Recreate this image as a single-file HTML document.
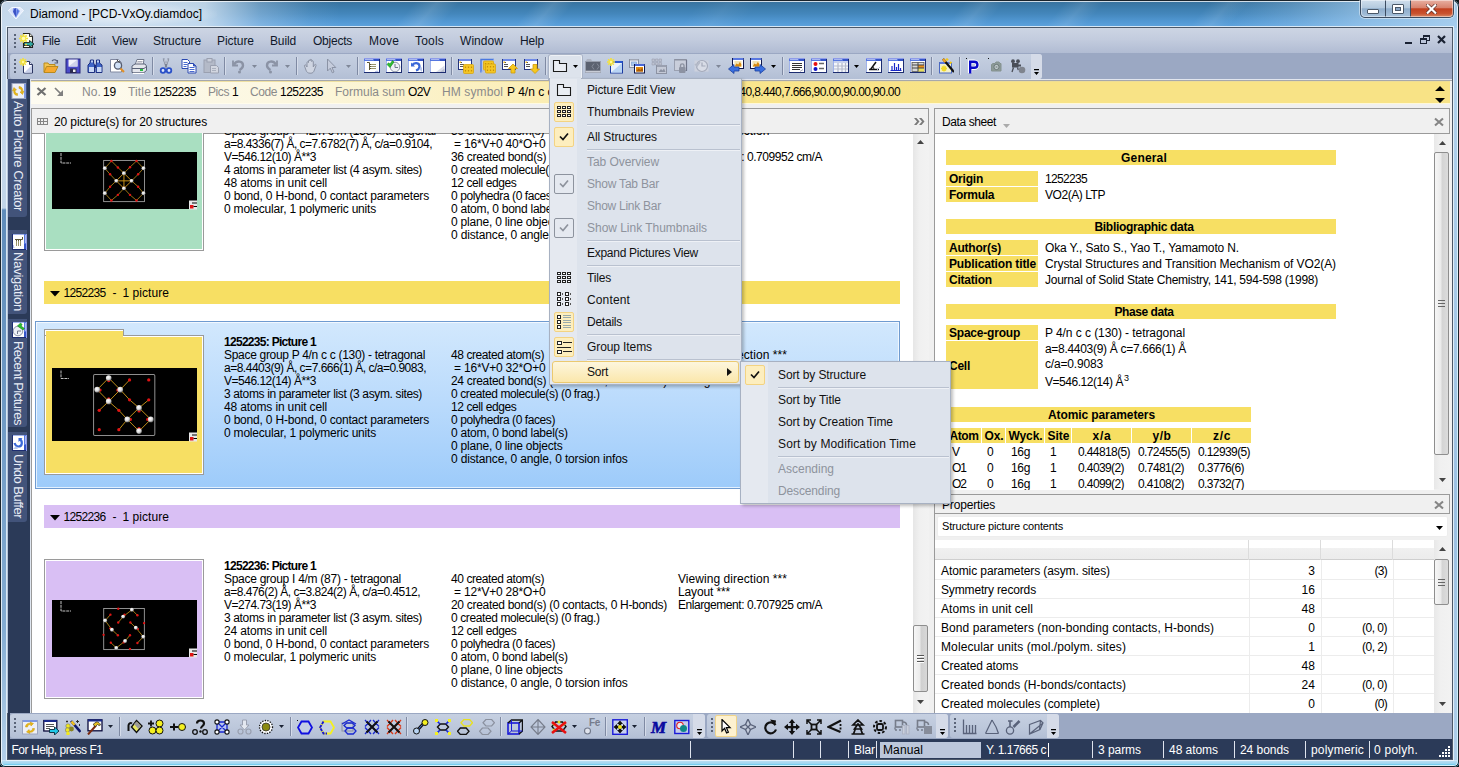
<!DOCTYPE html>
<html><head><meta charset="utf-8"><title>Diamond - [PCD-VxOy.diamdoc]</title>
<style>
html,body{margin:0;padding:0;background:#0e1618;}
body{width:1459px;height:767px;overflow:hidden;position:relative;font-family:"Liberation Sans",sans-serif;font-size:12px;}
#r{position:absolute;left:0;top:0;width:1459px;height:767px;overflow:hidden;border-radius:7px 7px 5px 5px;}
#r div,#r span,#r svg{position:absolute;box-sizing:border-box;}
.t{white-space:pre;}
</style></head><body><div id="r">
<div style="left:0px;top:0px;width:1459px;height:767px;background:linear-gradient(180deg,#b9d1ea 0%,#b4cde6 30%,#8fb0d4 60%,#a9c6e4 100%);"></div>
<div style="left:0px;top:0px;width:1459px;height:28px;background:linear-gradient(180deg,#376f99 0,#3c7cac 25%,#4487bc 50%,#5197d2 75%,#5fa4df 100%);"></div>
<div style="left:405px;top:0px;width:45px;height:28px;background:linear-gradient(90deg,rgba(255,255,255,0) 0,rgba(255,255,255,0.13) 50%,rgba(255,255,255,0) 100%);transform:skewX(-40deg);"></div>
<div style="left:525px;top:0px;width:40px;height:28px;background:linear-gradient(90deg,rgba(255,255,255,0) 0,rgba(255,255,255,0.12) 50%,rgba(255,255,255,0) 100%);transform:skewX(-40deg);"></div>
<div style="left:955px;top:0px;width:40px;height:28px;background:linear-gradient(90deg,rgba(255,255,255,0) 0,rgba(255,255,255,0.1) 50%,rgba(255,255,255,0) 100%);transform:skewX(-40deg);"></div>
<div style="left:1055px;top:0px;width:40px;height:28px;background:linear-gradient(90deg,rgba(255,255,255,0) 0,rgba(255,255,255,0.1) 50%,rgba(255,255,255,0) 100%);transform:skewX(-40deg);"></div>
<div style="left:1200px;top:0px;width:40px;height:28px;background:linear-gradient(90deg,rgba(255,255,255,0) 0,rgba(255,255,255,0.1) 50%,rgba(255,255,255,0) 100%);transform:skewX(-40deg);"></div>
<div style="left:690px;top:0px;width:60px;height:28px;background:linear-gradient(90deg,rgba(255,255,255,0) 0,rgba(255,255,255,0.06) 50%,rgba(255,255,255,0) 100%);transform:skewX(-40deg);"></div>
<div style="left:0px;top:0px;width:1459px;height:28px;background:linear-gradient(90deg,rgba(204,221,238,.95) 0,rgba(212,227,241,.95) 130px,rgba(210,226,241,.85) 205px,rgba(200,220,240,.35) 260px,rgba(200,220,240,.08) 310px,rgba(200,220,240,0) 340px,rgba(190,220,245,0) 1225px,rgba(180,215,245,.25) 1290px,rgba(176,212,242,.6) 1360px,rgba(180,214,242,.85) 1459px);"></div>
<div style="left:0px;top:28px;width:8px;height:739px;background:linear-gradient(180deg,#c4d8ec 0,#c2d5e8 180px,#5f8cba 182px,#6c97c2 350px,#84acd2 600px,#a9c8e4 700px,#b5d0ea 739px);"></div>
<div style="left:1452px;top:28px;width:7px;height:739px;background:linear-gradient(180deg,#b5d4ee 0,#a9cbe8 200px,#9cc0e2 500px,#b0cfe9 739px);"></div>
<div style="left:0px;top:760px;width:1459px;height:7px;background:linear-gradient(180deg,#d4e9f7 0,#b4dcf2 1.500px,#9fd6f0 3.500px,#62caee 5px,#48c2ee 6px,#3a88a8 7px);"></div>
<div style="left:1457px;top:28px;width:2px;height:739px;background:linear-gradient(180deg,#a8d4f0 0,#4cc6ee 60%,#40c4ee 100%);"></div>
<div style="left:6px;top:26px;width:1448px;height:735px;border:1px solid rgba(235,243,250,.85);"></div>
<div style="left:7px;top:27px;width:1446px;height:733px;border:1px solid #4c5868;background:#2b3a58;"></div>
<div style="left:0px;top:0px;width:1459px;height:767px;border:1px solid #1a242c;border-radius:7px 7px 5px 5px;box-shadow:inset 0 0 0 1px rgba(255,255,255,.75),0 0 0 6px #0e1618;background:transparent;"></div>
<svg style="left:8px;top:7px" width="16" height="13" viewBox="0 0 16 13"><polygon points="0.5,3.5 4,0.5 12,0.5 15.5,3.5 8,12" fill="#e4ecfb" stroke="#f4f8ff" stroke-width="1"/><polygon points="5,1 9,1 12,4 8,11 4,5" fill="#8ea4ec"/><polygon points="6,2 8,1 8,10 5,5" fill="#3b52c4"/><polygon points="9,2 11,4 8,10" fill="#4f6ee0"/><polygon points="1,4 4,1 5,5 7,10" fill="#d4def8"/></svg>
<div style="left:22px;top:3px;width:195px;height:22px;background:radial-gradient(ellipse at center,rgba(255,255,255,.45) 0,rgba(255,255,255,.25) 45%,rgba(255,255,255,0) 75%);"></div>
<span class="t" style="top:6.0px;line-height:16px;font-size:12px;color:#000;left:30px;letter-spacing:0.006px;">Diamond - [PCD-VxOy.diamdoc]</span>
<div style="left:1360px;top:0px;width:94px;height:18px;border:1px solid #3c4c60;border-top:none;border-radius:0 0 5px 5px;background:linear-gradient(180deg,#cfdeec 0,#b4cade 45%,#8fadcb 52%,#a9c3dc 100%);overflow:hidden;box-shadow:0 0 0 1px rgba(255,255,255,.45);"><div style="left:49px;top:0;width:44px;height:17px;background:linear-gradient(180deg,#e8b0a2 0,#d8836e 45%,#c2401f 52%,#c9532f 80%,#d88a68 100%);border-left:1px solid #3c4c60"></div><div style="left:24px;top:0;width:1px;height:17px;background:#3c4c60"></div><div style="left:0;top:0;width:92px;height:17px;box-shadow:inset 0 0 0 1px rgba(255,255,255,.45);border-radius:0 0 4px 4px"></div></div>
<div style="left:1367px;top:9px;width:12px;height:5px;background:#fff;border:1px solid #4a5868;border-radius:1px;"></div>
<div style="left:1392px;top:4px;width:12px;height:10px;border:1px solid #4a5868;background:#fff;border-radius:1px;"><div style="left:2px;top:2px;width:6px;height:4px;background:#8aa6c6;border:1px solid #4a5868"></div></div>
<svg style="left:1426px;top:4px" width="11" height="10" viewBox="0 0 13 12"><path d="M2 1.5l9 9M11 1.5l-9 9" stroke="#5a2a22" stroke-width="4.2" stroke-linecap="square"/><path d="M2 1.5l9 9M11 1.5l-9 9" stroke="#fff" stroke-width="2.6" stroke-linecap="square"/></svg>
<div style="left:8px;top:28px;width:1444px;height:25px;background:linear-gradient(180deg,#cdd5e4 0,#c3ccde 45%,#b1bcd3 100%);"></div>
<div style="left:14px;top:34px;width:2px;height:2px;background:#5a6478;"></div>
<div style="left:14px;top:38px;width:2px;height:2px;background:#5a6478;"></div>
<div style="left:14px;top:42px;width:2px;height:2px;background:#5a6478;"></div>
<div style="left:14px;top:46px;width:2px;height:2px;background:#5a6478;"></div>
<svg style="left:19px;top:32px" width="17" height="17" viewBox="0 0 17 17"><path d="M4.500 1.500h6l3 3v11h-9z" fill="#fffef0" stroke="#222" stroke-width="1.100"/><path d="M10.500 1.500v3h3" fill="#e8e8d8" stroke="#222" stroke-width=".9"/><path d="M4.500 2v9M0 6.500h9M1.300 3.300l6.400 6.400M7.700 3.300L1.300 9.700" stroke="#f2e23a" stroke-width="1.700"/><circle cx="4.500" cy="6.500" r="1.800" fill="#fffbb0"/><path d="M5 10.500h5.500V8.500l4.500 3.500-4.500 3.500v-2H5z" fill="#30a8a0" stroke="#111" stroke-width=".8"/><path d="M6 12.500h2" stroke="#e8d040" stroke-width="1.400"/></svg>
<span class="t" style="top:33.0px;line-height:16px;font-size:12px;color:#10182a;left:42px;letter-spacing:-0.336px;">File</span>
<span class="t" style="top:33.0px;line-height:16px;font-size:12px;color:#10182a;left:76px;letter-spacing:-0.172px;">Edit</span>
<span class="t" style="top:33.0px;line-height:16px;font-size:12px;color:#10182a;left:112px;letter-spacing:-0.199px;">View</span>
<span class="t" style="top:33.0px;line-height:16px;font-size:12px;color:#10182a;left:153px;letter-spacing:-0.076px;">Structure</span>
<span class="t" style="top:33.0px;line-height:16px;font-size:12px;color:#10182a;left:217px;letter-spacing:-0.051px;">Picture</span>
<span class="t" style="top:33.0px;line-height:16px;font-size:12px;color:#10182a;left:270px;letter-spacing:-0.138px;">Build</span>
<span class="t" style="top:33.0px;line-height:16px;font-size:12px;color:#10182a;left:313px;letter-spacing:-0.241px;">Objects</span>
<span class="t" style="top:33.0px;line-height:16px;font-size:12px;color:#10182a;left:369px;letter-spacing:0.164px;">Move</span>
<span class="t" style="top:33.0px;line-height:16px;font-size:12px;color:#10182a;left:415px;letter-spacing:0.197px;">Tools</span>
<span class="t" style="top:33.0px;line-height:16px;font-size:12px;color:#10182a;left:460px;letter-spacing:0.052px;">Window</span>
<span class="t" style="top:33.0px;line-height:16px;font-size:12px;color:#10182a;left:520px;letter-spacing:-0.172px;">Help</span>
<div style="left:1405px;top:42px;width:7px;height:2px;background:#1a2233;"></div>
<div style="left:1423px;top:35px;width:7px;height:6px;border:1px solid #1a2233;border-top-width:2px;"></div>
<div style="left:1420px;top:38px;width:7px;height:6px;border:1px solid #1a2233;border-top-width:2px;background:#bcc6da;"></div>
<svg style="left:1437px;top:35px" width="9" height="9" viewBox="0 0 9 9"><path d="M1 1l7 7M8 1l-7 7" stroke="#1a2233" stroke-width="2.2"/></svg>
<div style="left:8px;top:53px;width:1444px;height:26px;background:#9ba8c3;"></div>
<div style="left:10px;top:54px;width:1032px;height:25px;background:linear-gradient(180deg,#c6d0e1 0,#bcc7db 60%,#b3bfd5 100%);border-radius:3px;"></div>
<div style="left:1031px;top:54px;width:11px;height:25px;background:#d5dbe8;border-radius:0 3px 3px 0;"></div>
<div style="left:14px;top:59px;width:2px;height:2px;background:#5a6478;"></div>
<div style="left:14px;top:63px;width:2px;height:2px;background:#5a6478;"></div>
<div style="left:14px;top:67px;width:2px;height:2px;background:#5a6478;"></div>
<div style="left:14px;top:71px;width:2px;height:2px;background:#5a6478;"></div>
<div style="left:152px;top:57px;width:1px;height:18px;background:#7f8aa3;"></div>
<div style="left:153px;top:57px;width:1px;height:18px;background:#d5dcea;"></div>
<div style="left:224px;top:57px;width:1px;height:18px;background:#7f8aa3;"></div>
<div style="left:225px;top:57px;width:1px;height:18px;background:#d5dcea;"></div>
<div style="left:296px;top:57px;width:1px;height:18px;background:#7f8aa3;"></div>
<div style="left:297px;top:57px;width:1px;height:18px;background:#d5dcea;"></div>
<div style="left:357px;top:57px;width:1px;height:18px;background:#7f8aa3;"></div>
<div style="left:358px;top:57px;width:1px;height:18px;background:#d5dcea;"></div>
<div style="left:451px;top:57px;width:1px;height:18px;background:#7f8aa3;"></div>
<div style="left:452px;top:57px;width:1px;height:18px;background:#d5dcea;"></div>
<div style="left:545px;top:57px;width:1px;height:18px;background:#7f8aa3;"></div>
<div style="left:546px;top:57px;width:1px;height:18px;background:#d5dcea;"></div>
<div style="left:782px;top:57px;width:1px;height:18px;background:#7f8aa3;"></div>
<div style="left:783px;top:57px;width:1px;height:18px;background:#d5dcea;"></div>
<div style="left:931px;top:57px;width:1px;height:18px;background:#7f8aa3;"></div>
<div style="left:932px;top:57px;width:1px;height:18px;background:#d5dcea;"></div>
<div style="left:959px;top:57px;width:1px;height:18px;background:#7f8aa3;"></div>
<div style="left:960px;top:57px;width:1px;height:18px;background:#d5dcea;"></div>
<svg style="left:19px;top:58px" width="16" height="16" viewBox="0 0 16 16"><path d="M4.5 3.5h6l3 3v8.5h-9z" fill="#fff" stroke="#2a3560"/><path d="M5 15l8-8v7.5z" fill="#c8d0ea"/><path d="M10.5 3.5v3h3" fill="#dfe4f4" stroke="#2a3560"/><path d="M4 0v8M0 4h8M1.2 1.2l5.6 5.6M6.8 1.2L1.2 6.8" stroke="#f4e23c" stroke-width="1.6"/><circle cx="4" cy="4" r="1.2" fill="#fff8a0"/></svg>
<svg style="left:43px;top:58px" width="16" height="16" viewBox="0 0 16 16"><path d="M1 5h4l1 1.5h6V14H1z" fill="#f3c44f" stroke="#b98a1e"/><path d="M3.5 8.5H15l-3 6H1z" fill="#f6a930" stroke="#b98a1e"/><path d="M9 3c2-2 5-1.5 5.500 1.500M14.500 2v3h-3" fill="none" stroke="#555e78" stroke-width="1.1"/></svg>
<svg style="left:65px;top:58px" width="16" height="16" viewBox="0 0 16 16"><rect x="1" y="1" width="14" height="14" fill="#4a4ac8" stroke="#26267c"/><path d="M3.500 1.500h9v7h-9z" fill="#f2f2fa"/><path d="M3.500 8.500l9-7v7z" fill="#cfd2ea"/><rect x="5" y="10.500" width="6.500" height="4.500" fill="#2a2a50"/><rect x="8" y="11.500" width="2.500" height="2.500" fill="#f0f0f0"/></svg>
<svg style="left:86.5px;top:58px" width="16" height="16" viewBox="0 0 16 16"><path d="M3.500 2h3v3l1 2v7.500H1V7l2-2zM9.500 2h3v3l2.500 2v7.500H9V7l.5-2z" fill="#3f66c8" stroke="#1c2f80"/><rect x="2" y="9" width="5" height="5" fill="#c9d8f4"/><rect x="10" y="9" width="4.500" height="5" fill="#c9d8f4"/><rect x="4" y="2.500" width="2" height="2" fill="#bcd0f4"/><rect x="10" y="2.500" width="2" height="2" fill="#bcd0f4"/><rect x="7" y="7" width="2" height="3" fill="#1c2f80"/></svg>
<svg style="left:109px;top:58px" width="16" height="16" viewBox="0 0 16 16"><path d="M1.500 1.500h8l3 3V14h-11z" fill="#fff" stroke="#8088a0"/><circle cx="9" cy="7.500" r="3.600" fill="#cfe0f6" stroke="#555c70" stroke-width="1.300"/><path d="M11.500 10.500l3.500 3.500" stroke="#e0902a" stroke-width="2.200"/><path d="M8 1.500l1 2 2 .5" stroke="#444" fill="none"/></svg>
<svg style="left:131px;top:58px" width="16" height="16" viewBox="0 0 16 16"><path d="M4 7l2-5.500h7L12 7z" fill="#fff" stroke="#70788c"/><path d="M1 8l3-2h10l1.500 2v4.500L13 14.500H1z" fill="#e4e6ec" stroke="#5a6278"/><path d="M1 10.500h12l2.500-2" stroke="#5a6278" fill="none"/><rect x="9" y="11" width="3" height="2" fill="#28c040"/><path d="M2 15.500h11" stroke="#fff" stroke-width="1.400"/><path d="M6.500 3.500h5M6 5h5" stroke="#99a" stroke-width=".8"/></svg>
<svg style="left:158px;top:58px" width="16" height="16" viewBox="0 0 16 16"><path d="M5.500 0.500l3 9M10.500 0.500l-3 9" stroke="#7a8294" stroke-width="1.700"/><path d="M6 1l1.500 5M10 1L8.500 6" stroke="#d8dce8" stroke-width=".7"/><circle cx="5" cy="12.500" r="2.300" fill="#dfe8fa" stroke="#2a50c8" stroke-width="1.800"/><circle cx="11" cy="12.500" r="2.300" fill="#dfe8fa" stroke="#2a50c8" stroke-width="1.800"/></svg>
<svg style="left:181px;top:58px" width="16" height="16" viewBox="0 0 16 16"><path d="M1 1.500h5.500l2 2v7H1z" fill="#fff" stroke="#2a48b0"/><path d="M2.500 4.500h4M2.500 6.500h4M2.500 8.500h3" stroke="#4a6ad0"/><path d="M7 5.500h5.500l2.500 2.500v7H7z" fill="#fff" stroke="#2a48b0"/><path d="M8.500 9.500h5M8.500 11.500h5M8.500 13.500h5" stroke="#4a6ad0"/><path d="M12.500 5.500V8H15" fill="#4a6ad0" stroke="#2a48b0"/></svg>
<svg style="left:203px;top:58px" width="16" height="16" viewBox="0 0 16 16"><rect x="1" y="2" width="11" height="12.500" fill="#b4bac8" stroke="#9aa0b0"/><rect x="4" y="0.500" width="5" height="3.500" fill="#c9ceda" stroke="#9aa0b0"/><path d="M7.500 7.500h6l2 2V15h-8z" fill="#d2d6e0" stroke="#9aa0b0"/><path d="M9 10.500h4M9 12.500h4" stroke="#aab0be"/></svg>
<svg style="left:231px;top:58px" width="16" height="16" viewBox="0 0 16 16"><path d="M2 2.500v5h5" fill="none" stroke="#8b93a5" stroke-width="1.800"/><path d="M3 6.500C6 2 12 3 12 7.500c0 2.500-2 3.500-3.500 4.500" fill="none" stroke="#8b93a5" stroke-width="2.400"/><circle cx="8.500" cy="14" r="1.500" fill="#8b93a5"/></svg>
<svg style="left:263px;top:58px" width="16" height="16" viewBox="0 0 16 16"><path d="M14 2.500v5H9" fill="none" stroke="#8b93a5" stroke-width="1.800"/><path d="M13 6.500C10 2 4 3 4 7.500c0 2.500 2 3.500 3.500 4.500" fill="none" stroke="#8b93a5" stroke-width="2.400"/><circle cx="7.500" cy="14" r="1.500" fill="#8b93a5"/></svg>
<svg style="left:303px;top:58px" width="16" height="16" viewBox="0 0 16 16"><path d="M4 9V4.500c0-1 1.500-1 1.500 0V3c0-1.200 1.600-1.200 1.600 0v-.8c0-1.200 1.600-1.200 1.600 0V3.500c0-1 1.600-1 1.600 0V9l1.200-2.200c.6-1 2-.3 1.500.8L11 13c-.5 1.200-1.500 2.200-3 2.200H7c-2 0-3.500-1.200-4-3L1.500 8c-.3-1 1-1.600 1.500-.6z" fill="#cfd5e2" stroke="#8b93a5" stroke-width="1"/></svg>
<svg style="left:323px;top:58px" width="16" height="16" viewBox="0 0 16 16"><path d="M4.500 1v12l2.800-2.800 2 4.600 1.700-.8-2-4.500h3.800z" fill="#c5ccdc" stroke="#8b93a5" stroke-width="1"/></svg>
<svg style="left:364px;top:58px" width="16" height="16" viewBox="0 0 16 16"><g shape-rendering="crispEdges"><rect x="0" y="0" width="16" height="15" fill="#fff"/><rect x="0" y="0" width="16" height="1" fill="#8f9ce8"/><rect x="0" y="1" width="16" height="2" fill="#5577e0"/><rect x="10" y="1" width="6" height="2" fill="#3555c8"/><rect x="1" y="1" width="8" height="1" fill="#a9b8f0"/><rect x="0" y="3" width="1" height="11" fill="#9fb2ea"/><rect x="15" y="1" width="1" height="14" fill="#1c2c70"/><rect x="0" y="14" width="16" height="1" fill="#1c2c70"/></g><path d="M3 4.500h2.500V12M5.500 6.500H12M5.500 8.500H12M5.500 10.500H12" fill="none" stroke="#5c5636" stroke-width="1"/><path d="M7 6.500H12M7 8.500H12M7 10.500H12" fill="none" stroke="#9a946c" stroke-width="1"/><path d="M11 13.500h3l-1-1" stroke="#b8c4ec" fill="none"/></svg>
<svg style="left:386px;top:58px" width="16" height="16" viewBox="0 0 16 16"><g shape-rendering="crispEdges"><rect x="0" y="0" width="16" height="15" fill="#fff"/><rect x="0" y="0" width="16" height="1" fill="#8f9ce8"/><rect x="0" y="1" width="16" height="2" fill="#5577e0"/><rect x="10" y="1" width="6" height="2" fill="#3555c8"/><rect x="1" y="1" width="8" height="1" fill="#a9b8f0"/><rect x="0" y="3" width="1" height="11" fill="#9fb2ea"/><rect x="15" y="1" width="1" height="14" fill="#1c2c70"/><rect x="0" y="14" width="16" height="1" fill="#1c2c70"/></g><circle cx="9" cy="9" r="4.800" fill="#eef0f6" stroke="#9098a8"/><path d="M9 6v3.500h3" stroke="#70788c" fill="none"/><path d="M1 6.500l3 3 4-5.500-1.500-1.500L4 6 2.500 4.800z" fill="#2cc030" stroke="#188020" stroke-width=".6"/></svg>
<svg style="left:408px;top:58px" width="16" height="16" viewBox="0 0 16 16"><g shape-rendering="crispEdges"><rect x="0" y="0" width="16" height="15" fill="#fff"/><rect x="0" y="0" width="16" height="1" fill="#8f9ce8"/><rect x="0" y="1" width="16" height="2" fill="#5577e0"/><rect x="10" y="1" width="6" height="2" fill="#3555c8"/><rect x="1" y="1" width="8" height="1" fill="#a9b8f0"/><rect x="0" y="3" width="1" height="11" fill="#9fb2ea"/><rect x="15" y="1" width="1" height="14" fill="#1c2c70"/><rect x="0" y="14" width="16" height="1" fill="#1c2c70"/></g><path d="M4 7.500C6 4 11.500 4.500 11.500 8.500c0 2.500-2 3.500-3.500 4" fill="none" stroke="#3a68d8" stroke-width="2.200"/><path d="M3 4.500v4h4z" fill="#3a68d8"/><path d="M11 11l3-2v5z" fill="#b8c8ee"/></svg>
<svg style="left:430px;top:58px" width="16" height="16" viewBox="0 0 16 16"><g shape-rendering="crispEdges"><rect x="0" y="0" width="16" height="15" fill="#fff"/><rect x="0" y="0" width="16" height="1" fill="#8f9ce8"/><rect x="0" y="1" width="16" height="2" fill="#5577e0"/><rect x="10" y="1" width="6" height="2" fill="#3555c8"/><rect x="1" y="1" width="8" height="1" fill="#a9b8f0"/><rect x="0" y="3" width="1" height="11" fill="#9fb2ea"/><rect x="15" y="1" width="1" height="14" fill="#1c2c70"/><rect x="0" y="14" width="16" height="1" fill="#1c2c70"/></g><path d="M6 14l8.500-6.500V14z" fill="#d8dce8"/><path d="M10 14l4.500-3.500V14z" fill="#b8bed0"/></svg>
<svg style="left:458px;top:58px" width="16" height="16" viewBox="0 0 16 16"><rect x="0.5" y="1.5" width="13" height="10" fill="#fff" stroke="#24347e"/><rect x="1" y="1" width="12" height="2" fill="#6f8ae6"/><path d="M2 4.5h2M2 6.5h4M2 8.5h4" stroke="#555" stroke-width="1"/><rect x="1.5" y="3.5" width="1.5" height="1.5" fill="#e8b020"/><rect x="5.5" y="6.5" width="10" height="9" rx="1" fill="#f4c624" stroke="#d8a410" stroke-width=".8"/><path d="M7.5 8.5v1.500M10.5 8.5v1.500M13.5 8.5v1.500M7.5 12v1.500M10.5 12v1.500M13.5 12v1.500" stroke="#c89008" stroke-width="1.200"/></svg>
<svg style="left:480px;top:58px" width="16" height="16" viewBox="0 0 16 16"><path d="M1 14.500V1.500h13" fill="none" stroke="#4a78e0" stroke-width="1.400"/><path d="M1 14.500L4 12M14 1.500l-2.500 2" stroke="#9ab4f0" stroke-width="1"/><rect x="3.5" y="3" width="10" height="9" rx="1" fill="#f4c624" stroke="#d8a410" stroke-width=".8"/><path d="M5.5 5v1.500M8.5 5v1.500M11.5 5v1.500M5.5 8.5v1.500M8.5 8.5v1.500M11.5 8.5v1.500" stroke="#c89008" stroke-width="1.200"/><rect x="5.5" y="6" width="10" height="9" rx="1" fill="#f4c624" stroke="#d8a410" stroke-width=".8"/><path d="M7.5 8v1.500M10.5 8v1.500M13.5 8v1.500M7.5 11.5v1.500M10.5 11.5v1.500M13.5 11.5v1.500" stroke="#c89008" stroke-width="1.200"/></svg>
<svg style="left:502px;top:58px" width="16" height="16" viewBox="0 0 16 16"><rect x="0.5" y="1.5" width="13" height="10" fill="#fff" stroke="#24347e"/><rect x="1" y="1" width="12" height="2" fill="#6f8ae6"/><path d="M2 4.5h2M2 6.5h4M2 8.5h4" stroke="#555" stroke-width="1"/><rect x="1.5" y="3.5" width="1.5" height="1.5" fill="#e8b020"/><path d="M11 6l4.500 4.500H13V15H9v-4.500H6.500z" fill="#f6c81e" stroke="#d09a08" stroke-width=".8"/></svg>
<svg style="left:524px;top:58px" width="16" height="16" viewBox="0 0 16 16"><rect x="0.5" y="1.5" width="13" height="10" fill="#fff" stroke="#24347e"/><rect x="1" y="1" width="12" height="2" fill="#6f8ae6"/><path d="M2 4.5h2M2 6.5h4M2 8.5h4" stroke="#555" stroke-width="1"/><rect x="1.5" y="3.5" width="1.5" height="1.5" fill="#e8b020"/><path d="M11 15.500L15.500 11H13V6.500H9V11H6.500z" fill="#f6c81e" stroke="#d09a08" stroke-width=".8"/></svg>
<svg style="left:585px;top:58px" width="16" height="16" viewBox="0 0 16 16"><path d="M1 3l1-2h4l1 2z" fill="#aeb4c2"/><rect x="0.500" y="3.500" width="15" height="11" fill="#5c6270" stroke="#9aa0ae"/><path d="M0.500 13.500h15" stroke="#c8ccd6" stroke-width="1.600"/><path d="M9 5.500l-2 3 2 3M12 5.500l2 3-2 3" fill="none" stroke="#848a98" stroke-width="1"/></svg>
<svg style="left:607px;top:58px" width="16" height="16" viewBox="0 0 16 16"><rect x="3.500" y="3.500" width="12" height="11.500" fill="#eaf2fc" stroke="#1a3aa0"/><path d="M4 14.500L15 5v9.500z" fill="#b8d4f4"/><rect x="4" y="3" width="11.500" height="2" fill="#2a58d0"/><path d="M4 0v8M0 4h8M1.2 1.2l5.6 5.6M6.8 1.2L1.2 6.8" stroke="#f4e23c" stroke-width="1.6"/><circle cx="4" cy="4" r="1.2" fill="#fff8a0"/></svg>
<svg style="left:629px;top:58px" width="16" height="16" viewBox="0 0 16 16"><rect x="0.500" y="1.500" width="9" height="8" fill="#e8ecf4" stroke="#8a90a0"/><rect x="1" y="1" width="8.500" height="1.500" fill="#a0a6b4"/><rect x="2.500" y="4" width="5" height="3.500" fill="#a8c8f0" stroke="#7a98c8" stroke-width=".6"/><rect x="5.500" y="6.500" width="10" height="8.500" fill="#fff" stroke="#10184a"/><rect x="6" y="6" width="9.500" height="2" fill="#4a68d8"/><rect x="7" y="9" width="7" height="4.500" fill="#e08a10"/><path d="M7 13.500l2.500-3 2 1.500 1.500-2 1 1v2.500z" fill="#a85a08"/></svg>
<svg style="left:651px;top:58px" width="16" height="16" viewBox="0 0 16 16"><path d="M1 1h2.500v2.500H1zM4.500 1H7v2.500H4.500zM8 1h2.500v2.500H8zM1 4.500h2.500V7H1zM4.500 4.500H7V7H4.500zM8 4.500h2.500V7H8z" fill="#bcc2d0" stroke="#9aa0b0" stroke-width=".6"/><rect x="5.500" y="7.500" width="10" height="8" fill="#c4c9d6" stroke="#8c92a2"/><rect x="6" y="7" width="9.500" height="2" fill="#9aa0b0"/><path d="M7.500 14l2.500-3 1.500 1.500 1.500-2 1.500 3.500z" fill="#8c92a2"/></svg>
<svg style="left:673px;top:58px" width="16" height="16" viewBox="0 0 16 16"><rect x="1.500" y="1.500" width="12" height="11" fill="#c9cedb" stroke="#9aa0b0"/><rect x="1.500" y="1" width="12" height="1.500" fill="#8c92a2"/><path d="M13.500 2v11" stroke="#70768a" stroke-width="1.200"/><rect x="6" y="9" width="6.500" height="6" rx="1" fill="#8c92a2"/><path d="M7.500 9V7.500c0-2.200 3.500-2.200 3.500 0V9" fill="none" stroke="#8c92a2" stroke-width="1.400"/></svg>
<svg style="left:694px;top:58px" width="16" height="16" viewBox="0 0 16 16"><rect x="0.500" y="2.500" width="14" height="11" fill="#cdd2de"/><circle cx="8" cy="8" r="5.500" fill="#d8dce6" stroke="#a4aaba" stroke-width="1.200"/><path d="M8 4.500V8h3.500" stroke="#a4aaba" fill="none" stroke-width="1.200"/><path d="M1 6l2 2 3-4" stroke="#b4bac8" fill="none" stroke-width="1.600"/></svg>
<svg style="left:728px;top:58px" width="16" height="16" viewBox="0 0 16 16"><rect x="4.5" y="0.500" width="11" height="10" fill="#fff" stroke="#10184a"/><rect x="5" y="0" width="10.500" height="2" fill="#5a78e0"/><rect x="6.5" y="3" width="7" height="6" fill="#f4e4b0"/><path d="M6.8 8.500l1.500-3 2 1 1.500-2.500 1.500 2v2.500z" fill="#d88a10"/><path d="M0.500 11L6 6.500v2.500h5v4H6v2.500z" fill="#3a70e0" stroke="#1a40a0" stroke-width=".8"/></svg>
<svg style="left:750px;top:58px" width="16" height="16" viewBox="0 0 16 16"><rect x="0.5" y="0.500" width="11" height="10" fill="#fff" stroke="#10184a"/><rect x="1" y="0" width="10.500" height="2" fill="#5a78e0"/><rect x="2.5" y="3" width="7" height="6" fill="#f4e4b0"/><path d="M2.8 8.500l1.500-3 2 1 1.500-2.500 1.500 2v2.500z" fill="#d88a10"/><path d="M15.500 11L10 6.500v2.500H5v4h5v2.500z" fill="#3a70e0" stroke="#1a40a0" stroke-width=".8"/></svg>
<svg style="left:789px;top:58px" width="16" height="16" viewBox="0 0 16 16"><g shape-rendering="crispEdges"><rect x="0" y="0" width="16" height="15" fill="#fff"/><rect x="0" y="0" width="16" height="1" fill="#8f9ce8"/><rect x="0" y="1" width="16" height="2" fill="#5577e0"/><rect x="10" y="1" width="6" height="2" fill="#3555c8"/><rect x="1" y="1" width="8" height="1" fill="#a9b8f0"/><rect x="0" y="3" width="1" height="11" fill="#9fb2ea"/><rect x="15" y="1" width="1" height="14" fill="#1c2c70"/><rect x="0" y="14" width="16" height="1" fill="#1c2c70"/></g><path d="M3 5.500h10M3 7.500h10M3 9.500h10M3 11.500h8" stroke="#333" stroke-width="1"/><path d="M11 13.500l3-2" stroke="#aab" /></svg>
<svg style="left:811px;top:58px" width="16" height="16" viewBox="0 0 16 16"><g shape-rendering="crispEdges"><rect x="0" y="0" width="16" height="15" fill="#fff"/><rect x="0" y="0" width="16" height="1" fill="#8f9ce8"/><rect x="0" y="1" width="16" height="2" fill="#5577e0"/><rect x="10" y="1" width="6" height="2" fill="#3555c8"/><rect x="1" y="1" width="8" height="1" fill="#a9b8f0"/><rect x="0" y="3" width="1" height="11" fill="#9fb2ea"/><rect x="15" y="1" width="1" height="14" fill="#1c2c70"/><rect x="0" y="14" width="16" height="1" fill="#1c2c70"/></g><circle cx="4.500" cy="6" r="2" fill="#e81010"/><circle cx="4.500" cy="11" r="2" fill="#1010c8"/><path d="M8 5.500h5M8 10.500h5" stroke="#666" stroke-width="1.300"/></svg>
<svg style="left:833px;top:58px" width="16" height="16" viewBox="0 0 16 16"><g shape-rendering="crispEdges"><rect x="0" y="0" width="16" height="15" fill="#f4f6fb"/><rect x="0" y="0" width="16" height="1" fill="#8f9ce8"/><rect x="0" y="1" width="16" height="2" fill="#5577e0"/><rect x="10" y="1" width="6" height="2" fill="#3555c8"/><rect x="1" y="1" width="8" height="1" fill="#a9b8f0"/><rect x="0" y="3" width="1" height="11" fill="#9fb2ea"/><rect x="15" y="1" width="1" height="14" fill="#1c2c70"/><rect x="0" y="14" width="16" height="1" fill="#1c2c70"/></g><rect x="1" y="3" width="14" height="2" fill="#c9d2ec"/><path d="M1 8h14M1 11h14M5 5v9M9 5v9M12.500 5v9" stroke="#b4bacb" stroke-width="1.200"/></svg>
<svg style="left:866px;top:58px" width="16" height="16" viewBox="0 0 16 16"><g shape-rendering="crispEdges"><rect x="0" y="0" width="16" height="15" fill="#fff"/><rect x="0" y="0" width="16" height="1" fill="#8f9ce8"/><rect x="0" y="1" width="16" height="2" fill="#5577e0"/><rect x="10" y="1" width="6" height="2" fill="#3555c8"/><rect x="1" y="1" width="8" height="1" fill="#a9b8f0"/><rect x="0" y="3" width="1" height="11" fill="#9fb2ea"/><rect x="15" y="1" width="1" height="14" fill="#1c2c70"/><rect x="0" y="14" width="16" height="1" fill="#1c2c70"/></g><path d="M3 11.500h10M4.500 11.500L10 4" stroke="#111" stroke-width="1.500" fill="none"/><path d="M8 11.500c0-1.500-.5-2.500-1.500-3.200" stroke="#111" fill="none"/><path d="M10 13l4-4" stroke="#b8c0d8"/></svg>
<svg style="left:888px;top:58px" width="16" height="16" viewBox="0 0 16 16"><g shape-rendering="crispEdges"><rect x="0" y="0" width="16" height="15" fill="#fff"/><rect x="0" y="0" width="16" height="1" fill="#8f9ce8"/><rect x="0" y="1" width="16" height="2" fill="#5577e0"/><rect x="10" y="1" width="6" height="2" fill="#3555c8"/><rect x="1" y="1" width="8" height="1" fill="#a9b8f0"/><rect x="0" y="3" width="1" height="11" fill="#9fb2ea"/><rect x="15" y="1" width="1" height="14" fill="#1c2c70"/><rect x="0" y="14" width="16" height="1" fill="#1c2c70"/></g><path d="M2.500 12.500h11M4 12.500V8M6.500 12.500V5M8.500 12.500V9M10.500 12.500V6M12.500 12.500V10" stroke="#1a28c8" stroke-width="1.200" fill="none"/></svg>
<svg style="left:910px;top:58px" width="16" height="16" viewBox="0 0 16 16"><g shape-rendering="crispEdges"><rect x="0" y="0" width="16" height="15" fill="#fff"/><rect x="0" y="0" width="16" height="1" fill="#8f9ce8"/><rect x="0" y="1" width="16" height="2" fill="#5577e0"/><rect x="10" y="1" width="6" height="2" fill="#3555c8"/><rect x="1" y="1" width="8" height="1" fill="#a9b8f0"/><rect x="0" y="3" width="1" height="11" fill="#9fb2ea"/><rect x="15" y="1" width="1" height="14" fill="#1c2c70"/><rect x="0" y="14" width="16" height="1" fill="#1c2c70"/></g><rect x="2" y="4.500" width="12" height="9" fill="#d8d8d8" stroke="#555" stroke-width=".8"/><rect x="8" y="7" width="6" height="3" fill="#f09018"/><rect x="8" y="10" width="6" height="3.500" fill="#e8e060"/><path d="M2 7h12M2 10h12M8 4.500v9" stroke="#444" stroke-width="1"/></svg>
<svg style="left:938px;top:58px" width="16" height="16" viewBox="0 0 16 16"><rect x="1.500" y="4.500" width="12" height="10.500" fill="#f4f0c8" stroke="#4a68c0"/><rect x="2" y="4" width="11.500" height="2" fill="#5a78e0"/><path d="M6 7.500v6M3 10.500h6M4 8.500l4 4M8 8.500l-4 4" stroke="#f0d828" stroke-width="1.400"/><path d="M5 1l11 13" stroke="#111" stroke-width="2.200"/><path d="M5 1l2.500 3" stroke="#f0a020" stroke-width="2.400"/><path d="M9 0v3M7.500 1.500h3M12.500 3.500v2.500M11.500 4.500h2.500" stroke="#f0c820" stroke-width="1.200"/></svg>
<svg style="left:966px;top:58px" width="16" height="16" viewBox="0 0 16 16"><path d="M4 15V3.500h4c4.500 0 4.500 6.500 0 6.500H5" fill="none" stroke="#fff" stroke-width="4.200"/><path d="M4.200 15.500V3.700h4c4.300 0 4.300 6.100 0 6.100h-4" fill="none" stroke="#0808c8" stroke-width="2.400"/><rect x="0" y="0" width="1" height="1" fill="#111"/></svg>
<svg style="left:988px;top:58px" width="16" height="16" viewBox="0 0 16 16"><path d="M3.500 6.500l1.500-1h2l1-1.500h3l1 1.500h1v7.500h-9.500z" fill="#8d9a98" stroke="#84928f"/><circle cx="8.500" cy="9" r="2.600" fill="#c4ccd0" stroke="#6a7876"/><circle cx="8.500" cy="9" r="1.100" fill="#8d9a98"/><rect x="0" y="0" width="1" height="1" fill="#111"/></svg>
<svg style="left:1010px;top:58px" width="16" height="16" viewBox="0 0 16 16"><circle cx="3" cy="3.200" r="1.900" fill="#4a4e58"/><circle cx="8" cy="3.200" r="1.900" fill="#4a4e58"/><path d="M2 5h6.500v1.500H11v2H8.500v1H2z" fill="#4a4e58"/><path d="M2 14l1.500-4.500M7.500 9.500l.8 2.500" stroke="#4a4e58" stroke-width="1.300"/><circle cx="12" cy="12" r="3.300" fill="#7f848e"/></svg>
<svg style="left:252px;top:65px" width="5" height="3" viewBox="0 0 5 3"><path d="M0 0h5L2.500 3z" fill="#7f8798"/></svg>
<svg style="left:285px;top:65px" width="5" height="3" viewBox="0 0 5 3"><path d="M0 0h5L2.500 3z" fill="#7f8798"/></svg>
<svg style="left:346px;top:65px" width="5" height="3" viewBox="0 0 5 3"><path d="M0 0h5L2.500 3z" fill="#7f8798"/></svg>
<svg style="left:716px;top:65px" width="5" height="3" viewBox="0 0 5 3"><path d="M0 0h5L2.500 3z" fill="#7f8798"/></svg>
<svg style="left:771px;top:65px" width="5" height="3" viewBox="0 0 5 3"><path d="M0 0h5L2.500 3z" fill="#000"/></svg>
<svg style="left:854px;top:65px" width="5" height="3" viewBox="0 0 5 3"><path d="M0 0h5L2.500 3z" fill="#000"/></svg>
<svg style="left:1034px;top:69px" width="5" height="6" viewBox="0 0 5 6"><path d="M0 0h5v1.200H0zM0 3h5L2.500 6z" fill="#000"/></svg>
<div style="left:8px;top:79px;width:23px;height:634px;background:#2b3a58;"></div>
<div style="left:30px;top:79px;width:1px;height:634px;background:#dfe6f0;"></div>
<div style="left:7px;top:79px;width:1px;height:634px;background:#b4c4d8;"></div>
<div style="left:8px;top:79px;width:19px;height:138px;background:#42537a;border-radius:0 0 3px 0;"></div>
<span class="t" style="left:26px;top:101px;line-height:16px;font-size:13px;color:#e8ecf6;transform-origin:0 0;transform:rotate(90deg);letter-spacing:-0.389px;">Auto Picture Creator</span>
<svg style="left:10.500px;top:83px;transform:rotate(90deg)" width="16" height="16" viewBox="0 0 16 16"><rect x="0.500" y="1.500" width="15" height="13.500" fill="#eef0f6" stroke="#9aa4c0"/><rect x="1" y="1" width="14" height="2" fill="#7f98e0"/><path d="M3.500 8c0-3 3-4.500 5.500-3.500l-1-1.500 3.500 1.500L9 7l-.3-1.300C7 5.200 5.500 6.300 5.500 8zM12.500 9.500c0 3-3 4.500-5.500 3.500l1 1.500-3.500-1.500L7 10.500l.3 1.300c1.700.5 3.200-.6 3.200-2.300z" fill="#e8b818" stroke="#c89808" stroke-width=".5"/></svg>
<div style="left:8px;top:230px;width:19px;height:84px;background:#42537a;border-radius:0 0 3px 0;"></div>
<span class="t" style="left:26px;top:252px;line-height:16px;font-size:13px;color:#e8ecf6;transform-origin:0 0;transform:rotate(90deg);letter-spacing:-0.244px;">Navigation</span>
<svg style="left:10.500px;top:234px;transform:rotate(90deg)" width="16" height="16" viewBox="0 0 16 16"><g shape-rendering="crispEdges"><rect x="0" y="0" width="16" height="15" fill="#fff"/><rect x="0" y="0" width="16" height="1" fill="#8f9ce8"/><rect x="0" y="1" width="16" height="2" fill="#5577e0"/><rect x="10" y="1" width="6" height="2" fill="#3555c8"/><rect x="1" y="1" width="8" height="1" fill="#a9b8f0"/><rect x="0" y="3" width="1" height="11" fill="#9fb2ea"/><rect x="15" y="1" width="1" height="14" fill="#1c2c70"/><rect x="0" y="14" width="16" height="1" fill="#1c2c70"/></g><path d="M3 4.500h2.500V12M5.500 6.500H12M5.500 8.500H12M5.500 10.500H12" fill="none" stroke="#5c5636" stroke-width="1"/><path d="M7 6.500H12M7 8.500H12M7 10.500H12" fill="none" stroke="#9a946c" stroke-width="1"/><path d="M11 13.500h3l-1-1" stroke="#b8c4ec" fill="none"/></svg>
<div style="left:8px;top:319px;width:19px;height:108px;background:#42537a;border-radius:0 0 3px 0;"></div>
<span class="t" style="left:26px;top:341px;line-height:16px;font-size:13px;color:#e8ecf6;transform-origin:0 0;transform:rotate(90deg);letter-spacing:-0.518px;">Recent Pictures</span>
<svg style="left:10.500px;top:322px;transform:rotate(90deg)" width="16" height="16" viewBox="0 0 16 16"><g shape-rendering="crispEdges"><rect x="0" y="0" width="16" height="15" fill="#fff"/><rect x="0" y="0" width="16" height="1" fill="#8f9ce8"/><rect x="0" y="1" width="16" height="2" fill="#5577e0"/><rect x="10" y="1" width="6" height="2" fill="#3555c8"/><rect x="1" y="1" width="8" height="1" fill="#a9b8f0"/><rect x="0" y="3" width="1" height="11" fill="#9fb2ea"/><rect x="15" y="1" width="1" height="14" fill="#1c2c70"/><rect x="0" y="14" width="16" height="1" fill="#1c2c70"/></g><circle cx="9" cy="9" r="4.800" fill="#eef0f6" stroke="#9098a8"/><path d="M9 6v3.500h3" stroke="#70788c" fill="none"/><path d="M1 6.500l3 3 4-5.500-1.500-1.500L4 6 2.500 4.800z" fill="#2cc030" stroke="#188020" stroke-width=".6"/></svg>
<div style="left:8px;top:432px;width:19px;height:90px;background:#42537a;border-radius:0 0 3px 0;"></div>
<span class="t" style="left:26px;top:454px;line-height:16px;font-size:13px;color:#e8ecf6;transform-origin:0 0;transform:rotate(90deg);letter-spacing:-0.467px;">Undo Buffer</span>
<svg style="left:10.500px;top:435px;transform:rotate(90deg)" width="16" height="16" viewBox="0 0 16 16"><g shape-rendering="crispEdges"><rect x="0" y="0" width="16" height="15" fill="#fff"/><rect x="0" y="0" width="16" height="1" fill="#8f9ce8"/><rect x="0" y="1" width="16" height="2" fill="#5577e0"/><rect x="10" y="1" width="6" height="2" fill="#3555c8"/><rect x="1" y="1" width="8" height="1" fill="#a9b8f0"/><rect x="0" y="3" width="1" height="11" fill="#9fb2ea"/><rect x="15" y="1" width="1" height="14" fill="#1c2c70"/><rect x="0" y="14" width="16" height="1" fill="#1c2c70"/></g><path d="M4 7.500C6 4 11.500 4.500 11.500 8.500c0 2.500-2 3.500-3.500 4" fill="none" stroke="#3a68d8" stroke-width="2.200"/><path d="M3 4.500v4h4z" fill="#3a68d8"/><path d="M11 11l3-2v5z" fill="#b8c8ee"/></svg>
<div style="left:31px;top:79px;width:1421px;height:1px;background:#e2e6ee;"></div>
<div style="left:31px;top:80px;width:1421px;height:1px;background:#a6a8ac;"></div>
<div style="left:31px;top:81px;width:1419px;height:23px;background:linear-gradient(90deg,#fdfbf1 0,#fcf7e0 250px,#fbf0c0 450px,#fae9a0 600px,#f9e58c 720px,#f8e386 900px,#f8e386 100%);"></div>
<div style="left:31px;top:81px;width:1419px;height:1px;background:rgba(236,220,150,.85);"></div>
<div style="left:31px;top:103px;width:1419px;height:1px;background:rgba(255,252,238,.8);"></div>
<div style="left:31px;top:104px;width:1421px;height:4px;background:#f0f0f0;"></div>
<div style="left:1450px;top:81px;width:2px;height:27px;background:#f0f0f0;"></div>
<svg style="left:36px;top:86px" width="11" height="11" viewBox="0 0 11 11"><path d="M1.500 2l8 7M9.500 2l-8 7" stroke="#707070" stroke-width="2.300"/></svg>
<svg style="left:54px;top:87px" width="10" height="10" viewBox="0 0 10 10"><path d="M1 1l6.500 6.500" stroke="#808080" stroke-width="1.700" fill="none"/><path d="M9 3v6H3z" fill="#808080"/></svg>
<span class="t" style="top:84.0px;line-height:16px;font-size:12px;color:#8a8a8a;left:82px;letter-spacing:0.104px;">No.</span>
<span class="t" style="top:84.0px;line-height:16px;font-size:12px;color:#000;left:103px;letter-spacing:-0.180px;">19</span>
<span class="t" style="top:84.0px;line-height:16px;font-size:12px;color:#8a8a8a;left:128px;letter-spacing:0.153px;">Title</span>
<span class="t" style="top:84.0px;line-height:16px;font-size:12px;color:#000;left:153px;letter-spacing:-0.531px;">1252235</span>
<span class="t" style="top:84.0px;line-height:16px;font-size:12px;color:#8a8a8a;left:208px;letter-spacing:-0.418px;">Pics</span>
<span class="t" style="top:84.0px;line-height:16px;font-size:12px;color:#000;left:232px;">1</span>
<span class="t" style="top:84.0px;line-height:16px;font-size:12px;color:#8a8a8a;left:250px;letter-spacing:-0.422px;">Code</span>
<span class="t" style="top:84.0px;line-height:16px;font-size:12px;color:#000;left:280px;letter-spacing:-0.531px;">1252235</span>
<span class="t" style="top:84.0px;line-height:16px;font-size:12px;color:#8a8a8a;left:335px;letter-spacing:-0.001px;">Formula sum</span>
<span class="t" style="top:84.0px;line-height:16px;font-size:12px;color:#000;left:408px;letter-spacing:-0.672px;">O2V</span>
<span class="t" style="top:84.0px;line-height:16px;font-size:12px;color:#8a8a8a;left:442px;letter-spacing:0.109px;">HM symbol</span>
<span class="t" style="top:84.0px;line-height:16px;font-size:12px;color:#000;left:507px;letter-spacing:0.011px;">P 4/n c c (130)</span>
<span class="t" style="top:84.0px;line-height:16px;font-size:12px;color:#8a8a8a;left:600px;letter-spacing:-0.168px;">Cell</span>
<span class="t" style="top:84.0px;line-height:16px;font-size:12px;color:#000;left:724.5px;letter-spacing:-0.610px;">8.440,8.440,7.666,90.00,90.00,90.00</span>
<svg style="left:1434px;top:85px" width="12" height="20" viewBox="0 0 12 20"><path d="M1 6l5-5 5 5zM1 13l5 5 5-5z" fill="#000"/></svg>
<div style="left:31px;top:108px;width:898px;height:605px;background:#fff;border-left:1px solid #9a9a9a;"></div>
<div style="left:31px;top:108px;width:898px;height:26px;background:#f0f0f0;border:1px solid #9a9a9a;"></div>
<div style="left:37px;top:118px;width:11px;height:7px;border:1px solid #858585;background:linear-gradient(90deg,transparent 2px,#858585 2px,#858585 3px,transparent 3px,transparent 5px,#858585 5px,#858585 6px,transparent 6px),linear-gradient(180deg,transparent 2px,#858585 2px,#858585 3px,transparent 3px);"></div>
<span class="t" style="top:113.5px;line-height:16px;font-size:12px;color:#000;left:54px;letter-spacing:-0.120px;">20 picture(s) for 20 structures</span>
<svg style="left:914px;top:118px" width="11" height="7" viewBox="0 0 11 7"><path d="M0 0h2.500l3 3.500-3 3.500H0l3-3.500zM5 0h2.500l3 3.500-3 3.500H5l3-3.500z" fill="#7a7a7a"/></svg>
<div style="left:913px;top:134px;width:16px;height:579px;background:linear-gradient(90deg,#e6e6e6 0,#f0f0f0 40%,#f2f2f2 100%);"></div>
<svg style="left:917px;top:140px" width="7" height="4" viewBox="0 0 7 4"><path d="M0 4l3.500-4L7 4z" fill="#444"/></svg>
<svg style="left:917px;top:700px" width="7" height="4" viewBox="0 0 7 4"><path d="M0 0l3.500 4L7 0z" fill="#444"/></svg>
<div style="left:913px;top:625px;width:15px;height:67px;border:1px solid #8e8e8e;border-radius:2px;background:linear-gradient(90deg,#f6f6f6 0,#ebebeb 45%,#d0d0d0 55%,#d8d8d8 100%);"></div>
<div style="left:917px;top:655px;width:7px;height:2px;background:linear-gradient(180deg,#555 50%,#fff 50%);"></div>
<div style="left:917px;top:658px;width:7px;height:2px;background:linear-gradient(180deg,#555 50%,#fff 50%);"></div>
<div style="left:917px;top:661px;width:7px;height:2px;background:linear-gradient(180deg,#555 50%,#fff 50%);"></div>
<div style="left:32px;top:133px;width:881px;height:579px;overflow:hidden">
<div style="left:-32px;top:-133px;width:1px;height:1px">
<div style="left:44px;top:111px;width:160px;height:140px;background:#a9dfc1;border:1px solid #9a9a9a;box-shadow:inset 0 0 0 1px #fff;"></div>
<span class="t" style="top:123.4px;line-height:16px;font-size:12px;color:#000;left:224px;letter-spacing:-0.291px;">Space group P 42/n c m (138) - tetragonal</span>
<span class="t" style="top:136.4px;line-height:16px;font-size:12px;color:#000;left:224px;letter-spacing:-0.500px;">a=8.4336(7) Å, c=7.6782(7) Å, c/a=0.9104,</span>
<span class="t" style="top:149.4px;line-height:16px;font-size:12px;color:#000;left:224px;letter-spacing:-0.494px;">V=546.12(10) Å**3</span>
<span class="t" style="top:162.4px;line-height:16px;font-size:12px;color:#000;left:224px;letter-spacing:-0.359px;">4 atoms in parameter list (4 asym. sites)</span>
<span class="t" style="top:175.4px;line-height:16px;font-size:12px;color:#000;left:224px;letter-spacing:-0.146px;">48 atoms in unit cell</span>
<span class="t" style="top:188.4px;line-height:16px;font-size:12px;color:#000;left:224px;letter-spacing:-0.188px;">0 bond, 0 H-bond, 0 contact parameters</span>
<span class="t" style="top:201.4px;line-height:16px;font-size:12px;color:#000;left:224px;letter-spacing:-0.203px;">0 molecular, 1 polymeric units</span>
<span class="t" style="top:123.4px;line-height:16px;font-size:12px;color:#000;left:451px;letter-spacing:-0.429px;">56 created atom(s)</span>
<span class="t" style="top:136.4px;line-height:16px;font-size:12px;color:#000;left:451px;letter-spacing:-0.209px;"> = 16*V+0 40*O+0</span>
<span class="t" style="top:149.4px;line-height:16px;font-size:12px;color:#000;left:451px;letter-spacing:-0.305px;">36 created bond(s) (0 contacts, 0 H-bonds)</span>
<span class="t" style="top:162.4px;line-height:16px;font-size:12px;color:#000;left:451px;letter-spacing:-0.395px;">0 created molecule(s) (0 frag.)</span>
<span class="t" style="top:175.4px;line-height:16px;font-size:12px;color:#000;left:451px;letter-spacing:-0.409px;">12 cell edges</span>
<span class="t" style="top:188.4px;line-height:16px;font-size:12px;color:#000;left:451px;letter-spacing:-0.416px;">0 polyhedra (0 faces)</span>
<span class="t" style="top:201.4px;line-height:16px;font-size:12px;color:#000;left:451px;letter-spacing:-0.259px;">0 atom, 0 bond label(s)</span>
<span class="t" style="top:214.4px;line-height:16px;font-size:12px;color:#000;left:451px;letter-spacing:-0.200px;">0 plane, 0 line objects</span>
<span class="t" style="top:227.4px;line-height:16px;font-size:12px;color:#000;left:451px;letter-spacing:-0.153px;">0 distance, 0 angle, 0 torsion infos</span>
<span class="t" style="top:123.4px;line-height:16px;font-size:12px;color:#000;left:678px;letter-spacing:0.055px;">Viewing direction ***</span>
<span class="t" style="top:136.4px;line-height:16px;font-size:12px;color:#000;left:678px;letter-spacing:-0.138px;">Layout ***</span>
<span class="t" style="top:149.4px;line-height:16px;font-size:12px;color:#000;left:678px;letter-spacing:-0.440px;">Enlargement: 0.709952 cm/A</span>
<div style="left:52px;top:152px;width:145px;height:57px;background:#000;"></div>
<svg style="left:40px;top:130px" width="170" height="125" viewBox="0 0 1042.95 766.875"><defs><radialGradient id="gv0" cx="40%" cy="35%" r="65%"><stop offset="0" stop-color="#fff"/><stop offset=".6" stop-color="#d8d8d8"/><stop offset="1" stop-color="#777"/></radialGradient></defs><rect x="391" y="186" width="250" height="254" fill="none" stroke="#d8d8d8" stroke-width="4"/><path d="M468 312L515 265 M515 265L562 312 M562 312L515 358 M515 358L468 312 M468 312L562 312 M515 265L515 358" stroke="#c89018" stroke-width="6" fill="none"/><path d="M438 190L398 235 M438 190L478 230 M478 230L515 265 M515 265L552 228 M552 228L592 190 M592 190L635 235 M398 235L430 272 M430 272L468 312 M468 312L430 348 M430 348L398 388 M398 388L438 432 M438 432L478 398 M478 398L515 358 M515 358L552 398 M552 398L592 432 M592 432L635 388 M635 388L602 348 M602 348L562 312 M562 312L602 272 M602 272L635 235" stroke="#d09c1c" stroke-width="4.5" fill="none"/><circle cx="438" cy="190" r="7.5" fill="#e01414"/><circle cx="592" cy="190" r="7.5" fill="#e01414"/><circle cx="438" cy="432" r="7.5" fill="#e01414"/><circle cx="592" cy="432" r="7.5" fill="#e01414"/><circle cx="478" cy="230" r="7.5" fill="#e01414"/><circle cx="552" cy="228" r="7.5" fill="#e01414"/><circle cx="430" cy="272" r="7.5" fill="#e01414"/><circle cx="602" cy="272" r="7.5" fill="#e01414"/><circle cx="430" cy="348" r="7.5" fill="#e01414"/><circle cx="602" cy="348" r="7.5" fill="#e01414"/><circle cx="478" cy="398" r="7.5" fill="#e01414"/><circle cx="552" cy="398" r="7.5" fill="#e01414"/><circle cx="515" cy="268" r="7.5" fill="#e01414"/><circle cx="515" cy="355" r="7.5" fill="#e01414"/><circle cx="398" cy="235" r="12" fill="url(#gv0)"/><circle cx="398" cy="388" r="12" fill="url(#gv0)"/><circle cx="635" cy="235" r="12" fill="url(#gv0)"/><circle cx="635" cy="388" r="12" fill="url(#gv0)"/><circle cx="468" cy="312" r="12" fill="url(#gv0)"/><circle cx="562" cy="312" r="12" fill="url(#gv0)"/><circle cx="515" cy="265" r="12" fill="url(#gv0)"/><circle cx="515" cy="358" r="12" fill="url(#gv0)"/><path d="M128.835 141.105v61.35h61.35" stroke="#d8d8d8" stroke-width="5.5215" fill="none" stroke-dasharray="18.405 4.908"/><rect x="914.115" y="432.517" width="49.08" height="55.215" fill="#e8e8e8"/><rect x="920.25" y="460.125" width="21.4725" height="21.4725" fill="#e01414"/><path d="M932.52 447.855h30.675M941.722 469.327h21.4725" stroke="#000" stroke-width="7.362"/></svg>
<div style="left:44px;top:281px;width:856px;height:23px;background:#f7df63;"></div>
<svg style="left:49.500px;top:291px" width="10" height="6" viewBox="0 0 10 6"><path d="M0 0h10L5 5.500z" fill="#000"/></svg>
<span class="t" style="top:285.3px;line-height:16px;font-size:12px;color:#000;left:63.5px;letter-spacing:-0.674px;">1252235</span>
<span class="t" style="top:285.3px;line-height:16px;font-size:12px;color:#000;left:112.5px;">-</span>
<span class="t" style="top:285.3px;line-height:16px;font-size:12px;color:#000;left:122.5px;letter-spacing:0.052px;">1 picture</span>
<div style="left:35px;top:321px;width:865px;height:168px;border:1px solid #6f9bd0;box-shadow:inset 0 0 0 1px rgba(255,255,255,.7);background:linear-gradient(180deg,#d2e8fd 0,#b9dafc 50%,#9dcbfa 100%);"></div>
<div style="left:44px;top:329px;width:80px;height:10px;background:#f7df63;border:1px solid #9a9a9a;border-bottom:none;box-shadow:inset 1px 1px 0 #fff;"></div>
<div style="left:44px;top:335px;width:160px;height:140px;background:#f7df63;border:1px solid #9a9a9a;box-shadow:inset 0 0 0 1px #fff;"></div>
<div style="left:46px;top:331px;width:77px;height:8px;background:#f7df63;"></div>
<span class="t" style="top:334.4px;line-height:16px;font-size:12px;color:#000;font-weight:bold;left:224px;letter-spacing:-0.708px;">1252235: Picture 1</span>
<span class="t" style="top:347.4px;line-height:16px;font-size:12px;color:#000;left:224px;letter-spacing:-0.306px;">Space group P 4/n c c (130) - tetragonal</span>
<span class="t" style="top:360.4px;line-height:16px;font-size:12px;color:#000;left:224px;letter-spacing:-0.496px;">a=8.4403(9) Å, c=7.666(1) Å, c/a=0.9083,</span>
<span class="t" style="top:373.4px;line-height:16px;font-size:12px;color:#000;left:224px;letter-spacing:-0.494px;">V=546.12(14) Å**3</span>
<span class="t" style="top:386.4px;line-height:16px;font-size:12px;color:#000;left:224px;letter-spacing:-0.359px;">3 atoms in parameter list (3 asym. sites)</span>
<span class="t" style="top:399.4px;line-height:16px;font-size:12px;color:#000;left:224px;letter-spacing:-0.146px;">48 atoms in unit cell</span>
<span class="t" style="top:412.4px;line-height:16px;font-size:12px;color:#000;left:224px;letter-spacing:-0.188px;">0 bond, 0 H-bond, 0 contact parameters</span>
<span class="t" style="top:425.4px;line-height:16px;font-size:12px;color:#000;left:224px;letter-spacing:-0.203px;">0 molecular, 1 polymeric units</span>
<span class="t" style="top:347.4px;line-height:16px;font-size:12px;color:#000;left:451px;letter-spacing:-0.429px;">48 created atom(s)</span>
<span class="t" style="top:360.4px;line-height:16px;font-size:12px;color:#000;left:451px;letter-spacing:-0.209px;"> = 16*V+0 32*O+0</span>
<span class="t" style="top:373.4px;line-height:16px;font-size:12px;color:#000;left:451px;letter-spacing:-0.305px;">24 created bond(s) (0 contacts, 0 H-bonds)</span>
<span class="t" style="top:386.4px;line-height:16px;font-size:12px;color:#000;left:451px;letter-spacing:-0.395px;">0 created molecule(s) (0 frag.)</span>
<span class="t" style="top:399.4px;line-height:16px;font-size:12px;color:#000;left:451px;letter-spacing:-0.409px;">12 cell edges</span>
<span class="t" style="top:412.4px;line-height:16px;font-size:12px;color:#000;left:451px;letter-spacing:-0.416px;">0 polyhedra (0 faces)</span>
<span class="t" style="top:425.4px;line-height:16px;font-size:12px;color:#000;left:451px;letter-spacing:-0.259px;">0 atom, 0 bond label(s)</span>
<span class="t" style="top:438.4px;line-height:16px;font-size:12px;color:#000;left:451px;letter-spacing:-0.200px;">0 plane, 0 line objects</span>
<span class="t" style="top:451.4px;line-height:16px;font-size:12px;color:#000;left:451px;letter-spacing:-0.153px;">0 distance, 0 angle, 0 torsion infos</span>
<span class="t" style="top:347.4px;line-height:16px;font-size:12px;color:#000;left:678px;letter-spacing:0.055px;">Viewing direction ***</span>
<span class="t" style="top:360.4px;line-height:16px;font-size:12px;color:#000;left:678px;letter-spacing:-0.138px;">Layout ***</span>
<span class="t" style="top:373.4px;line-height:16px;font-size:12px;color:#000;left:678px;letter-spacing:-0.440px;">Enlargement: 0.709952 cm/A</span>
<div style="left:52px;top:368px;width:145px;height:73px;background:#000;"></div>
<svg style="left:40px;top:325px" width="170" height="155" viewBox="0 0 840.99 766.785"><defs><radialGradient id="gv1" cx="40%" cy="35%" r="65%"><stop offset="0" stop-color="#fff"/><stop offset=".6" stop-color="#d8d8d8"/><stop offset="1" stop-color="#777"/></radialGradient></defs><rect x="265" y="245" width="303" height="302" rx="6" fill="none" stroke="#8e8e8e" stroke-width="5"/><path d="M340 262L283 320 M283 320L340 378 M340 378L397 320 M397 320L340 262 M397 320L443 272 M397 320L443 370 M340 378L293 422 M340 378L390 422 M390 422L432 467 M490 410L538 370 M490 410L432 467 M432 467L490 525 M490 525L548 467 M548 467L490 410 M432 467L390 518 M443 370L490 410" stroke="#d09c1c" stroke-width="4.5" fill="none"/><circle cx="443" cy="272" r="8" fill="#e01414"/><circle cx="538" cy="272" r="8" fill="#e01414"/><circle cx="297" cy="322" r="8" fill="#e01414"/><circle cx="385" cy="322" r="8" fill="#e01414"/><circle cx="340" cy="275" r="8" fill="#e01414"/><circle cx="443" cy="370" r="8" fill="#e01414"/><circle cx="538" cy="370" r="8" fill="#e01414"/><circle cx="293" cy="422" r="8" fill="#e01414"/><circle cx="390" cy="422" r="8" fill="#e01414"/><circle cx="490" cy="425" r="8" fill="#e01414"/><circle cx="447" cy="467" r="8" fill="#e01414"/><circle cx="533" cy="467" r="8" fill="#e01414"/><circle cx="293" cy="518" r="8" fill="#e01414"/><circle cx="390" cy="518" r="8" fill="#e01414"/><circle cx="490" cy="512" r="8" fill="#e01414"/><circle cx="340" cy="366" r="8" fill="#e01414"/><circle cx="340" cy="262" r="14" fill="url(#gv1)"/><circle cx="283" cy="320" r="14" fill="url(#gv1)"/><circle cx="397" cy="320" r="14" fill="url(#gv1)"/><circle cx="340" cy="378" r="14" fill="url(#gv1)"/><circle cx="490" cy="410" r="14" fill="url(#gv1)"/><circle cx="432" cy="467" r="14" fill="url(#gv1)"/><circle cx="548" cy="467" r="14" fill="url(#gv1)"/><circle cx="490" cy="525" r="14" fill="url(#gv1)"/><path d="M103.887 225.089v39.576h39.576" stroke="#d8d8d8" stroke-width="4.4523" fill="none" stroke-dasharray="14.841 3.9576"/><rect x="737.103" y="531.803" width="39.576" height="44.523" fill="#e8e8e8"/><rect x="742.05" y="554.064" width="17.3145" height="17.3145" fill="#e01414"/><path d="M751.944 544.17h24.735M759.365 561.485h17.3145" stroke="#000" stroke-width="5.9364"/></svg>
<div style="left:44px;top:505px;width:856px;height:23px;background:#d9bff4;"></div>
<svg style="left:49.500px;top:515px" width="10" height="6" viewBox="0 0 10 6"><path d="M0 0h10L5 5.500z" fill="#000"/></svg>
<span class="t" style="top:509.3px;line-height:16px;font-size:12px;color:#000;left:63.5px;letter-spacing:-0.674px;">1252236</span>
<span class="t" style="top:509.3px;line-height:16px;font-size:12px;color:#000;left:112.5px;">-</span>
<span class="t" style="top:509.3px;line-height:16px;font-size:12px;color:#000;left:122.5px;letter-spacing:0.052px;">1 picture</span>
<div style="left:44px;top:559px;width:160px;height:140px;background:#d9bff4;border:1px solid #9a9a9a;box-shadow:inset 0 0 0 1px #fff;"></div>
<span class="t" style="top:558.4px;line-height:16px;font-size:12px;color:#000;font-weight:bold;left:224px;letter-spacing:-0.708px;">1252236: Picture 1</span>
<span class="t" style="top:571.4px;line-height:16px;font-size:12px;color:#000;left:224px;letter-spacing:-0.279px;">Space group I 4/m (87) - tetragonal</span>
<span class="t" style="top:584.4px;line-height:16px;font-size:12px;color:#000;left:224px;letter-spacing:-0.491px;">a=8.476(2) Å, c=3.824(2) Å, c/a=0.4512,</span>
<span class="t" style="top:597.4px;line-height:16px;font-size:12px;color:#000;left:224px;letter-spacing:-0.494px;">V=274.73(19) Å**3</span>
<span class="t" style="top:610.4px;line-height:16px;font-size:12px;color:#000;left:224px;letter-spacing:-0.359px;">3 atoms in parameter list (3 asym. sites)</span>
<span class="t" style="top:623.4px;line-height:16px;font-size:12px;color:#000;left:224px;letter-spacing:-0.146px;">24 atoms in unit cell</span>
<span class="t" style="top:636.4px;line-height:16px;font-size:12px;color:#000;left:224px;letter-spacing:-0.188px;">0 bond, 0 H-bond, 0 contact parameters</span>
<span class="t" style="top:649.4px;line-height:16px;font-size:12px;color:#000;left:224px;letter-spacing:-0.203px;">0 molecular, 1 polymeric units</span>
<span class="t" style="top:571.4px;line-height:16px;font-size:12px;color:#000;left:451px;letter-spacing:-0.429px;">40 created atom(s)</span>
<span class="t" style="top:584.4px;line-height:16px;font-size:12px;color:#000;left:451px;letter-spacing:-0.209px;"> = 12*V+0 28*O+0</span>
<span class="t" style="top:597.4px;line-height:16px;font-size:12px;color:#000;left:451px;letter-spacing:-0.305px;">20 created bond(s) (0 contacts, 0 H-bonds)</span>
<span class="t" style="top:610.4px;line-height:16px;font-size:12px;color:#000;left:451px;letter-spacing:-0.395px;">0 created molecule(s) (0 frag.)</span>
<span class="t" style="top:623.4px;line-height:16px;font-size:12px;color:#000;left:451px;letter-spacing:-0.409px;">12 cell edges</span>
<span class="t" style="top:636.4px;line-height:16px;font-size:12px;color:#000;left:451px;letter-spacing:-0.416px;">0 polyhedra (0 faces)</span>
<span class="t" style="top:649.4px;line-height:16px;font-size:12px;color:#000;left:451px;letter-spacing:-0.259px;">0 atom, 0 bond label(s)</span>
<span class="t" style="top:662.4px;line-height:16px;font-size:12px;color:#000;left:451px;letter-spacing:-0.200px;">0 plane, 0 line objects</span>
<span class="t" style="top:675.4px;line-height:16px;font-size:12px;color:#000;left:451px;letter-spacing:-0.153px;">0 distance, 0 angle, 0 torsion infos</span>
<span class="t" style="top:571.4px;line-height:16px;font-size:12px;color:#000;left:678px;letter-spacing:0.055px;">Viewing direction ***</span>
<span class="t" style="top:584.4px;line-height:16px;font-size:12px;color:#000;left:678px;letter-spacing:-0.138px;">Layout ***</span>
<span class="t" style="top:597.4px;line-height:16px;font-size:12px;color:#000;left:678px;letter-spacing:-0.440px;">Enlargement: 0.707925 cm/A</span>
<div style="left:52px;top:600px;width:145px;height:57px;background:#000;"></div>
<svg style="left:40px;top:555px" width="170" height="150" viewBox="0 0 869.04 766.8"><defs><radialGradient id="gv2" cx="40%" cy="35%" r="65%"><stop offset="0" stop-color="#fff"/><stop offset=".6" stop-color="#d8d8d8"/><stop offset="1" stop-color="#777"/></radialGradient></defs><rect x="326" y="273" width="207" height="211" fill="none" stroke="#d0d0d0" stroke-width="3.500"/><path d="M470 280L425 315 M425 315L400 345 M470 280L498 308 M333 335L360 305 M333 335L368 382 M368 382L398 410 M462 345L490 372 M490 372L528 418 M528 418L498 450 M460 410L435 440 M435 440L390 475 M390 475L362 448" stroke="#d09c1c" stroke-width="4" fill="none"/><circle cx="400" cy="275" r="6" fill="#e01414"/><circle cx="360" cy="305" r="6" fill="#e01414"/><circle cx="498" cy="308" r="6" fill="#e01414"/><circle cx="400" cy="345" r="6" fill="#e01414"/><circle cx="462" cy="345" r="6" fill="#e01414"/><circle cx="532" cy="348" r="6" fill="#e01414"/><circle cx="325" cy="408" r="6" fill="#e01414"/><circle cx="398" cy="410" r="6" fill="#e01414"/><circle cx="460" cy="410" r="6" fill="#e01414"/><circle cx="498" cy="450" r="6" fill="#e01414"/><circle cx="362" cy="448" r="6" fill="#e01414"/><circle cx="460" cy="480" r="6" fill="#e01414"/><circle cx="432" cy="305" r="6" fill="#e01414"/><circle cx="500" cy="378" r="6" fill="#e01414"/><circle cx="428" cy="447" r="6" fill="#e01414"/><circle cx="360" cy="375" r="6" fill="#e01414"/><circle cx="470" cy="280" r="10" fill="url(#gv2)"/><circle cx="425" cy="315" r="10" fill="url(#gv2)"/><circle cx="333" cy="335" r="10" fill="url(#gv2)"/><circle cx="368" cy="382" r="10" fill="url(#gv2)"/><circle cx="490" cy="372" r="10" fill="url(#gv2)"/><circle cx="528" cy="418" r="10" fill="url(#gv2)"/><circle cx="435" cy="440" r="10" fill="url(#gv2)"/><circle cx="390" cy="475" r="10" fill="url(#gv2)"/><path d="M107.352 235.152v51.12h51.12" stroke="#d8d8d8" stroke-width="4.6008" fill="none" stroke-dasharray="15.336 4.0896"/><rect x="761.688" y="477.972" width="40.896" height="46.008" fill="#e8e8e8"/><rect x="766.8" y="500.976" width="17.892" height="17.892" fill="#e01414"/><path d="M777.024 490.752h25.56M784.692 508.644h17.892" stroke="#000" stroke-width="6.1344"/></svg>
</div></div>
<div style="left:929px;top:108px;width:523px;height:605px;background:#f0f0f0;"></div>
<div style="left:934px;top:108px;width:1px;height:605px;background:#9a9a9a;"></div>
<div style="left:935px;top:134px;width:499px;height:356px;background:#fff;"></div>
<div style="left:934px;top:108px;width:516px;height:26px;background:#f0f0f0;border:1px solid #9a9a9a;"></div>
<span class="t" style="top:113.5px;line-height:16px;font-size:12px;color:#000;left:942px;letter-spacing:-0.405px;">Data sheet</span>
<svg style="left:1003px;top:124px" width="7" height="4" viewBox="0 0 7 4"><path d="M0 0h7L3.5 4z" fill="#aaa"/></svg>
<svg style="left:1434px;top:117px" width="10" height="10" viewBox="0 0 10 10"><path d="M1 1.500l8 7M9 1.500l-8 7" stroke="#858585" stroke-width="2.100"/></svg>
<div style="left:1434px;top:134px;width:16px;height:355px;background:linear-gradient(90deg,#e8e8e8 0,#f0f0f0 40%,#f2f2f2 100%);"></div>
<svg style="left:1439px;top:141px" width="7" height="4" viewBox="0 0 7 4"><path d="M0 4l3.500-4L7 4z" fill="#444"/></svg>
<svg style="left:1439px;top:478px" width="7" height="4" viewBox="0 0 7 4"><path d="M0 0l3.500 4L7 0z" fill="#444"/></svg>
<div style="left:1434px;top:152px;width:15px;height:303px;border:1px solid #8e8e8e;border-radius:2px;background:linear-gradient(90deg,#f6f6f6 0,#ebebeb 45%,#d4d4d4 55%,#dcdcdc 100%);"></div>
<div style="left:1438px;top:300px;width:7px;height:1px;background:#666;"></div>
<div style="left:1438px;top:303px;width:7px;height:1px;background:#666;"></div>
<div style="left:1438px;top:306px;width:7px;height:1px;background:#666;"></div>
<div style="left:936px;top:134px;width:498px;height:356px;overflow:hidden"><div style="left:-936px;top:-134px;width:1px;height:1px">
<div style="left:946px;top:150px;width:390px;height:15px;background:#f7df63;"></div>
<span class="t" style="top:150.0px;line-height:16px;font-size:12px;color:#000;font-weight:bold;left:1121.0px;letter-spacing:0.185px;">General</span>
<div style="left:946px;top:171px;width:92px;height:15px;background:#f7df63;"></div>
<span class="t" style="top:171.0px;line-height:16px;font-size:12px;color:#000;font-weight:bold;left:949px;letter-spacing:-0.224px;">Origin</span>
<span class="t" style="top:171.0px;line-height:16px;font-size:12px;color:#000;left:1045px;letter-spacing:-0.674px;">1252235</span>
<div style="left:946px;top:187px;width:92px;height:15px;background:#f7df63;"></div>
<span class="t" style="top:187.0px;line-height:16px;font-size:12px;color:#000;font-weight:bold;left:949px;letter-spacing:-0.335px;">Formula</span>
<span class="t" style="top:187.0px;line-height:16px;font-size:12px;color:#000;left:1045px;letter-spacing:-0.447px;">VO2(A) LTP</span>
<div style="left:946px;top:219px;width:390px;height:15px;background:#f7df63;"></div>
<span class="t" style="top:219.0px;line-height:16px;font-size:12px;color:#000;font-weight:bold;left:1094.5px;letter-spacing:-0.316px;">Bibliographic data</span>
<div style="left:946px;top:240px;width:92px;height:15px;background:#f7df63;"></div>
<span class="t" style="top:240.0px;line-height:16px;font-size:12px;color:#000;font-weight:bold;left:949px;letter-spacing:-0.222px;">Author(s)</span>
<span class="t" style="top:240.0px;line-height:16px;font-size:12px;color:#000;left:1045px;letter-spacing:-0.145px;">Oka Y., Sato S., Yao T., Yamamoto N.</span>
<div style="left:946px;top:256px;width:92px;height:15px;background:#f7df63;"></div>
<span class="t" style="top:256.0px;line-height:16px;font-size:12px;color:#000;font-weight:bold;left:949px;letter-spacing:-0.138px;">Publication title</span>
<span class="t" style="top:256.0px;line-height:16px;font-size:12px;color:#000;left:1045px;letter-spacing:-0.084px;">Crystal Structures and Transition Mechanism of VO2(A)</span>
<div style="left:946px;top:272px;width:92px;height:15px;background:#f7df63;"></div>
<span class="t" style="top:272.0px;line-height:16px;font-size:12px;color:#000;font-weight:bold;left:949px;letter-spacing:-0.209px;">Citation</span>
<span class="t" style="top:272.0px;line-height:16px;font-size:12px;color:#000;left:1045px;letter-spacing:-0.244px;">Journal of Solid State Chemistry, 141, 594-598 (1998)</span>
<div style="left:946px;top:304px;width:390px;height:15px;background:#f7df63;"></div>
<span class="t" style="top:304.0px;line-height:16px;font-size:12px;color:#000;font-weight:bold;left:1114.5px;letter-spacing:-0.438px;">Phase data</span>
<div style="left:946px;top:325px;width:92px;height:15px;background:#f7df63;"></div>
<span class="t" style="top:325.0px;line-height:16px;font-size:12px;color:#000;font-weight:bold;left:949px;letter-spacing:-0.213px;">Space-group</span>
<span class="t" style="top:325.0px;line-height:16px;font-size:12px;color:#000;left:1045px;letter-spacing:-0.066px;">P 4/n c c (130) - tetragonal</span>
<div style="left:946px;top:341px;width:92px;height:48px;background:#f7df63;"></div>
<span class="t" style="top:357.5px;line-height:16px;font-size:12px;color:#000;font-weight:bold;left:949px;letter-spacing:-0.254px;">Cell</span>
<span class="t" style="top:341.0px;line-height:16px;font-size:12px;color:#000;left:1045px;letter-spacing:-0.299px;">a=8.4403(9) Å c=7.666(1) Å</span>
<span class="t" style="top:356.0px;line-height:16px;font-size:12px;color:#000;left:1045px;letter-spacing:-0.172px;">c/a=0.9083</span>
<span class="t" style="top:374.0px;line-height:16px;font-size:12px;color:#000;left:1045px;letter-spacing:-0.458px;">V=546.12(14) Å</span>
<span class="t" style="top:370.0px;line-height:16px;font-size:9px;color:#000;left:1124px;">3</span>
<div style="left:946px;top:407px;width:305px;height:15px;background:#f7df63;"></div>
<span class="t" style="top:407.0px;line-height:16px;font-size:12px;color:#000;font-weight:bold;left:1048.0px;letter-spacing:-0.101px;">Atomic parameters</span>
<div style="left:946px;top:428px;width:35px;height:15px;background:#f7df63;"></div>
<span class="t" style="top:428.0px;line-height:16px;font-size:12px;color:#000;font-weight:bold;left:949.5px;letter-spacing:-0.418px;">Atom</span>
<div style="left:982px;top:428px;width:23px;height:15px;background:#f7df63;"></div>
<span class="t" style="top:428.0px;line-height:16px;font-size:12px;color:#000;font-weight:bold;left:984.5px;letter-spacing:-0.115px;">Ox.</span>
<div style="left:1006px;top:428px;width:38px;height:15px;background:#f7df63;"></div>
<span class="t" style="top:428.0px;line-height:16px;font-size:12px;color:#000;font-weight:bold;left:1008.5px;letter-spacing:-0.094px;">Wyck.</span>
<div style="left:1045px;top:428px;width:26px;height:15px;background:#f7df63;"></div>
<span class="t" style="top:428.0px;line-height:16px;font-size:12px;color:#000;font-weight:bold;left:1047.5px;letter-spacing:-0.004px;">Site</span>
<div style="left:1072px;top:428px;width:59px;height:15px;background:#f7df63;"></div>
<span class="t" style="top:428.0px;line-height:16px;font-size:12px;color:#000;font-weight:bold;left:1092.5px;letter-spacing:0.771px;">x/a</span>
<div style="left:1132px;top:428px;width:59px;height:15px;background:#f7df63;"></div>
<span class="t" style="top:428.0px;line-height:16px;font-size:12px;color:#000;font-weight:bold;left:1152.5px;letter-spacing:0.552px;">y/b</span>
<div style="left:1192px;top:428px;width:59px;height:15px;background:#f7df63;"></div>
<span class="t" style="top:428.0px;line-height:16px;font-size:12px;color:#000;font-weight:bold;left:1213.0px;letter-spacing:0.661px;">z/c</span>
<span class="t" style="top:444.0px;line-height:16px;font-size:12px;color:#000;left:952px;">V</span>
<span class="t" style="top:444.0px;line-height:16px;font-size:12px;color:#000;left:987px;">0</span>
<span class="t" style="top:444.0px;line-height:16px;font-size:12px;color:#000;left:1011px;letter-spacing:-0.344px;">16g</span>
<span class="t" style="top:444.0px;line-height:16px;font-size:12px;color:#000;left:1050px;">1</span>
<span class="t" style="top:444.0px;line-height:16px;font-size:12px;color:#000;left:1078px;letter-spacing:-0.605px;">0.44818(5)</span>
<span class="t" style="top:444.0px;line-height:16px;font-size:12px;color:#000;left:1138px;letter-spacing:-0.605px;">0.72455(5)</span>
<span class="t" style="top:444.0px;line-height:16px;font-size:12px;color:#000;left:1198px;letter-spacing:-0.605px;">0.12939(5)</span>
<span class="t" style="top:460.0px;line-height:16px;font-size:12px;color:#000;left:952px;letter-spacing:-1.008px;">O1</span>
<span class="t" style="top:460.0px;line-height:16px;font-size:12px;color:#000;left:987px;">0</span>
<span class="t" style="top:460.0px;line-height:16px;font-size:12px;color:#000;left:1011px;letter-spacing:-0.344px;">16g</span>
<span class="t" style="top:460.0px;line-height:16px;font-size:12px;color:#000;left:1050px;">1</span>
<span class="t" style="top:460.0px;line-height:16px;font-size:12px;color:#000;left:1078px;letter-spacing:-0.597px;">0.4039(2)</span>
<span class="t" style="top:460.0px;line-height:16px;font-size:12px;color:#000;left:1138px;letter-spacing:-0.597px;">0.7481(2)</span>
<span class="t" style="top:460.0px;line-height:16px;font-size:12px;color:#000;left:1198px;letter-spacing:-0.597px;">0.3776(6)</span>
<span class="t" style="top:476.0px;line-height:16px;font-size:12px;color:#000;left:952px;letter-spacing:-1.008px;">O2</span>
<span class="t" style="top:476.0px;line-height:16px;font-size:12px;color:#000;left:987px;">0</span>
<span class="t" style="top:476.0px;line-height:16px;font-size:12px;color:#000;left:1011px;letter-spacing:-0.344px;">16g</span>
<span class="t" style="top:476.0px;line-height:16px;font-size:12px;color:#000;left:1050px;">1</span>
<span class="t" style="top:476.0px;line-height:16px;font-size:12px;color:#000;left:1078px;letter-spacing:-0.597px;">0.4099(2)</span>
<span class="t" style="top:476.0px;line-height:16px;font-size:12px;color:#000;left:1138px;letter-spacing:-0.597px;">0.4108(2)</span>
<span class="t" style="top:476.0px;line-height:16px;font-size:12px;color:#000;left:1198px;letter-spacing:-0.597px;">0.3732(7)</span>
</div></div>
<div style="left:934px;top:494px;width:516px;height:20px;background:#f0f0f0;border:1px solid #9a9a9a;"></div>
<span class="t" style="top:497.0px;line-height:16px;font-size:12px;color:#000;left:942px;letter-spacing:-0.170px;">Properties</span>
<svg style="left:1434px;top:499.5px" width="10" height="10" viewBox="0 0 10 10"><path d="M1 1.500l8 7M9 1.500l-8 7" stroke="#858585" stroke-width="2.100"/></svg>
<div style="left:937px;top:516px;width:511px;height:21px;background:#fff;border:1px solid #ededed;border-radius:2px;"></div>
<span class="t" style="top:518.0px;line-height:16px;font-size:11px;color:#000;left:942px;letter-spacing:-0.167px;">Structure picture contents</span>
<svg style="left:1436px;top:526px" width="7" height="4" viewBox="0 0 7 4"><path d="M0 0h7L3.5 4z" fill="#000"/></svg>
<div style="left:935px;top:540px;width:499px;height:173px;background:#fff;"></div>
<div style="left:935px;top:540px;width:499px;height:20px;background:linear-gradient(180deg,#fff 0,#fff 40%,#f0f0f0 45%,#ececec 100%);border-bottom:1px solid #cfcfcf;"></div>
<div style="left:1249px;top:560px;width:1px;height:153px;background:#ececec;"></div>
<div style="left:1248px;top:540px;width:1px;height:20px;background:#dcdcdc;"></div>
<div style="left:1321px;top:560px;width:1px;height:153px;background:#ececec;"></div>
<div style="left:1320px;top:540px;width:1px;height:20px;background:#dcdcdc;"></div>
<div style="left:1393px;top:560px;width:1px;height:153px;background:#ececec;"></div>
<div style="left:1392px;top:540px;width:1px;height:20px;background:#dcdcdc;"></div>
<div style="left:935px;top:579px;width:499px;height:1px;background:#ececec;"></div>
<span class="t" style="top:563.0px;line-height:16px;font-size:12px;color:#000;left:941px;letter-spacing:-0.098px;">Atomic parameters (asym. sites)</span>
<span class="t" style="top:563.0px;line-height:16px;font-size:12px;color:#000;left:1308.3px;">3</span>
<span class="t" style="top:563.0px;line-height:16px;font-size:12px;color:#000;left:1374.5px;letter-spacing:-0.724px;">(3)</span>
<div style="left:935px;top:598px;width:499px;height:1px;background:#ececec;"></div>
<span class="t" style="top:582.0px;line-height:16px;font-size:12px;color:#000;left:941px;letter-spacing:-0.147px;">Symmetry records</span>
<span class="t" style="top:582.0px;line-height:16px;font-size:12px;color:#000;left:1301.6px;">16</span>
<div style="left:935px;top:617px;width:499px;height:1px;background:#ececec;"></div>
<span class="t" style="top:601.0px;line-height:16px;font-size:12px;color:#000;left:941px;letter-spacing:0.072px;">Atoms in unit cell</span>
<span class="t" style="top:601.0px;line-height:16px;font-size:12px;color:#000;left:1301.6px;">48</span>
<div style="left:935px;top:636px;width:499px;height:1px;background:#ececec;"></div>
<span class="t" style="top:620.0px;line-height:16px;font-size:12px;color:#000;left:941px;letter-spacing:0.061px;">Bond parameters (non-bonding contacts, H-bonds)</span>
<span class="t" style="top:620.0px;line-height:16px;font-size:12px;color:#000;left:1308.3px;">0</span>
<span class="t" style="top:620.0px;line-height:16px;font-size:12px;color:#000;left:1362.0px;letter-spacing:-0.503px;">(0, 0)</span>
<div style="left:935px;top:655px;width:499px;height:1px;background:#ececec;"></div>
<span class="t" style="top:639.0px;line-height:16px;font-size:12px;color:#000;left:941px;letter-spacing:0.103px;">Molecular units (mol./polym. sites)</span>
<span class="t" style="top:639.0px;line-height:16px;font-size:12px;color:#000;left:1308.3px;">1</span>
<span class="t" style="top:639.0px;line-height:16px;font-size:12px;color:#000;left:1362.0px;letter-spacing:-0.503px;">(0, 2)</span>
<div style="left:935px;top:674px;width:499px;height:1px;background:#ececec;"></div>
<span class="t" style="top:658.0px;line-height:16px;font-size:12px;color:#000;left:941px;letter-spacing:-0.131px;">Created atoms</span>
<span class="t" style="top:658.0px;line-height:16px;font-size:12px;color:#000;left:1301.6px;">48</span>
<div style="left:935px;top:693px;width:499px;height:1px;background:#ececec;"></div>
<span class="t" style="top:677.0px;line-height:16px;font-size:12px;color:#000;left:941px;letter-spacing:0.049px;">Created bonds (H-bonds/contacts)</span>
<span class="t" style="top:677.0px;line-height:16px;font-size:12px;color:#000;left:1301.6px;">24</span>
<span class="t" style="top:677.0px;line-height:16px;font-size:12px;color:#000;left:1362.0px;letter-spacing:-0.503px;">(0, 0)</span>
<span class="t" style="top:696.0px;line-height:16px;font-size:12px;color:#000;left:941px;letter-spacing:-0.039px;">Created molecules (complete)</span>
<span class="t" style="top:696.0px;line-height:16px;font-size:12px;color:#000;left:1308.3px;">0</span>
<span class="t" style="top:696.0px;line-height:16px;font-size:12px;color:#000;left:1374.5px;letter-spacing:-0.724px;">(0)</span>
<div style="left:1434px;top:540px;width:16px;height:173px;background:linear-gradient(90deg,#e8e8e8 0,#f0f0f0 40%,#f2f2f2 100%);"></div>
<svg style="left:1439px;top:547px" width="7" height="4" viewBox="0 0 7 4"><path d="M0 4l3.500-4L7 4z" fill="#444"/></svg>
<svg style="left:1439px;top:702px" width="7" height="4" viewBox="0 0 7 4"><path d="M0 0l3.500 4L7 0z" fill="#444"/></svg>
<div style="left:1434px;top:559px;width:15px;height:46px;border:1px solid #8e8e8e;border-radius:2px;background:linear-gradient(90deg,#f6f6f6 0,#ebebeb 45%,#d4d4d4 55%,#dcdcdc 100%);"></div>
<div style="left:1438px;top:579px;width:7px;height:1px;background:#666;"></div>
<div style="left:1438px;top:582px;width:7px;height:1px;background:#666;"></div>
<div style="left:1438px;top:585px;width:7px;height:1px;background:#666;"></div>
<div style="left:8px;top:713px;width:1444px;height:26px;background:#9ba8c3;"></div>
<div style="left:8px;top:713px;width:2px;height:26px;background:#2b3a58;"></div>
<div style="left:10px;top:714px;width:695px;height:24px;background:linear-gradient(180deg,#c6d0e1 0,#bcc7db 60%,#b3bfd5 100%);border-radius:3px;"></div>
<div style="left:693px;top:714px;width:12px;height:24px;background:#d5dbe8;border-radius:0 3px 3px 0;"></div>
<svg style="left:697px;top:729px" width="5" height="6" viewBox="0 0 5 6"><path d="M0 0h5v1.200H0zM0 3h5L2.500 6z" fill="#000"/></svg>
<div style="left:14px;top:718px;width:2px;height:2px;background:#5a6478;"></div>
<div style="left:14px;top:722px;width:2px;height:2px;background:#5a6478;"></div>
<div style="left:14px;top:726px;width:2px;height:2px;background:#5a6478;"></div>
<div style="left:14px;top:730px;width:2px;height:2px;background:#5a6478;"></div>
<div style="left:707px;top:714px;width:241px;height:24px;background:linear-gradient(180deg,#c6d0e1 0,#bcc7db 60%,#b3bfd5 100%);border-radius:3px;"></div>
<div style="left:936px;top:714px;width:12px;height:24px;background:#d5dbe8;border-radius:0 3px 3px 0;"></div>
<svg style="left:940px;top:729px" width="5" height="6" viewBox="0 0 5 6"><path d="M0 0h5v1.200H0zM0 3h5L2.500 6z" fill="#000"/></svg>
<div style="left:711px;top:718px;width:2px;height:2px;background:#5a6478;"></div>
<div style="left:711px;top:722px;width:2px;height:2px;background:#5a6478;"></div>
<div style="left:711px;top:726px;width:2px;height:2px;background:#5a6478;"></div>
<div style="left:711px;top:730px;width:2px;height:2px;background:#5a6478;"></div>
<div style="left:950px;top:714px;width:109px;height:24px;background:linear-gradient(180deg,#c6d0e1 0,#bcc7db 60%,#b3bfd5 100%);border-radius:3px;"></div>
<div style="left:1047px;top:714px;width:12px;height:24px;background:#d5dbe8;border-radius:0 3px 3px 0;"></div>
<svg style="left:1051px;top:729px" width="5" height="6" viewBox="0 0 5 6"><path d="M0 0h5v1.200H0zM0 3h5L2.500 6z" fill="#000"/></svg>
<div style="left:954px;top:718px;width:2px;height:2px;background:#5a6478;"></div>
<div style="left:954px;top:722px;width:2px;height:2px;background:#5a6478;"></div>
<div style="left:954px;top:726px;width:2px;height:2px;background:#5a6478;"></div>
<div style="left:954px;top:730px;width:2px;height:2px;background:#5a6478;"></div>
<div style="left:119px;top:717px;width:1px;height:19px;background:#7f8aa3;"></div>
<div style="left:120px;top:717px;width:1px;height:19px;background:#d5dcea;"></div>
<div style="left:290px;top:717px;width:1px;height:19px;background:#7f8aa3;"></div>
<div style="left:291px;top:717px;width:1px;height:19px;background:#d5dcea;"></div>
<div style="left:406px;top:717px;width:1px;height:19px;background:#7f8aa3;"></div>
<div style="left:407px;top:717px;width:1px;height:19px;background:#d5dcea;"></div>
<div style="left:500px;top:717px;width:1px;height:19px;background:#7f8aa3;"></div>
<div style="left:501px;top:717px;width:1px;height:19px;background:#d5dcea;"></div>
<div style="left:605px;top:717px;width:1px;height:19px;background:#7f8aa3;"></div>
<div style="left:606px;top:717px;width:1px;height:19px;background:#d5dcea;"></div>
<div style="left:644px;top:717px;width:1px;height:19px;background:#7f8aa3;"></div>
<div style="left:645px;top:717px;width:1px;height:19px;background:#d5dcea;"></div>
<div style="left:715px;top:715px;width:22px;height:22px;background:#fdf1d0;border:1px solid #f0d48a;border-radius:2px;"></div>
<svg style="left:21.5px;top:718.5px" width="16" height="16" viewBox="0 0 16 16"><rect x="0.500" y="1.500" width="15" height="13.500" fill="#eef0f6" stroke="#9aa4c0"/><rect x="1" y="1" width="14" height="2" fill="#7f98e0"/><path d="M3.500 8c0-3 3-4.500 5.500-3.500l-1-1.500 3.500 1.500L9 7l-.3-1.300C7 5.200 5.500 6.300 5.500 8zM12.500 9.500c0 3-3 4.500-5.500 3.500l1 1.500-3.500-1.500L7 10.500l.3 1.300c1.700.5 3.200-.6 3.200-2.300z" fill="#e8b818" stroke="#c89808" stroke-width=".5"/></svg>
<svg style="left:43px;top:718.5px" width="16" height="16" viewBox="0 0 16 16"><rect x="0.800" y="1.500" width="13" height="10.500" fill="#fff" stroke="#0a0a3a" stroke-width="1.300"/><rect x="1" y="1" width="12.600" height="2" fill="#1a2a8a"/><path d="M3 5.500h8M3 7.500h8M3 9.500h4" stroke="#555" stroke-width="1"/><path d="M6.500 10.500h5V8l4.500 4-4.500 4v-2.500h-5z" fill="#20c8e8" stroke="#082838" stroke-width=".9"/></svg>
<svg style="left:64.5px;top:718.5px" width="16" height="16" viewBox="0 0 16 16"><path d="M6 2l9.500 11" stroke="#10186a" stroke-width="2.600"/><path d="M6.500 2.500l3 3.500" stroke="#f0c020" stroke-width="2.600"/><circle cx="3" cy="7" r="2.200" fill="#f0e820" stroke="#666" stroke-width=".5"/><circle cx="6.500" cy="10" r="2.400" fill="#8a8420"/><circle cx="2.500" cy="11" r="2.200" fill="#f0e820" stroke="#666" stroke-width=".5"/><circle cx="3" cy="14.500" r="1.800" fill="#f0e820"/><path d="M2 1.500v2M1 2.500h2M12.500 1v3M11 2.500h3M14.500 5v2" stroke="#222" stroke-width=".9"/></svg>
<svg style="left:87px;top:718.5px" width="16" height="16" viewBox="0 0 16 16"><rect x="1" y="0.800" width="14" height="11" fill="#fff" stroke="#0a0a3a" stroke-width="1.300"/><rect x="1" y="0.500" width="14" height="2" fill="#1a2a8a"/><path d="M1 15.500l8-9" stroke="#7a2a10" stroke-width="2"/><path d="M6 5.500l3-2.500c2-.5 4 1 4.500 3l-1.500.5-1.500-1-2 2z" fill="#e8c020" stroke="#222" stroke-width=".7"/></svg>
<svg style="left:126.5px;top:718.5px" width="16" height="16" viewBox="0 0 16 16"><path d="M1.500 12V6.500c0-2 2-3 3.500-2" fill="none" stroke="#111" stroke-width="2"/><path d="M9.500 1.500l5.500 5.500-5.500 6.500-5-5.500z" fill="#e8e860" stroke="#111" stroke-width="1.400"/><path d="M9.500 2.500l4.500 4.500-2.500 3-4.500-5z" fill="#9a9a9a"/></svg>
<svg style="left:148px;top:718.5px" width="16" height="16" viewBox="0 0 16 16"><path d="M0 4.500h6M3 1.500v6" stroke="#111" stroke-width="1.800"/><circle cx="11.5" cy="4.5" r="3.5" fill="#f4f020" stroke="#111" stroke-width="1"/><circle cx="4.5" cy="11.5" r="3.5" fill="#f4f020" stroke="#111" stroke-width="1"/><circle cx="11.5" cy="11.5" r="3.5" fill="#f4f020" stroke="#111" stroke-width="1"/></svg>
<svg style="left:170px;top:718.5px" width="16" height="16" viewBox="0 0 16 16"><path d="M0 8h8M4 4.500v7" stroke="#111" stroke-width="2"/><circle cx="12" cy="8" r="3.5" fill="#f4f020" stroke="#111" stroke-width="1"/></svg>
<svg style="left:192px;top:718.5px" width="16" height="16" viewBox="0 0 16 16"><path d="M5 4.500c0-4 7-4 7 0 0 2.500-3 2.500-3 5" fill="none" stroke="#111" stroke-width="2.200"/><circle cx="3" cy="13" r="2.300" fill="none" stroke="#111" stroke-width="1.300"/><circle cx="13" cy="13" r="2.300" fill="none" stroke="#111" stroke-width="1.300"/><circle cx="8.500" cy="12.500" r="1.200" fill="#111"/></svg>
<svg style="left:214px;top:718.5px" width="16" height="16" viewBox="0 0 16 16"><path d="M3 3h10v10H3zM3 3l10 10M13 3L3 13" fill="#b8c4f0" stroke="#1828d0" stroke-width="1.300"/><circle cx="3" cy="3" r="2.100" fill="#fff" stroke="#111" stroke-width="1.100"/><circle cx="13" cy="3" r="2.100" fill="#fff" stroke="#111" stroke-width="1.100"/><circle cx="3" cy="13" r="2.100" fill="#fff" stroke="#111" stroke-width="1.100"/><circle cx="13" cy="13" r="2.100" fill="#fff" stroke="#111" stroke-width="1.100"/></svg>
<svg style="left:236.5px;top:718.5px" width="16" height="16" viewBox="0 0 16 16"><path d="M5.500 1h4v5h2.500l-4.500 5-4.500-5h2.500z" fill="#e4e8f0" stroke="#9aa0b0"/><circle cx="3.500" cy="12.500" r="2.500" fill="none" stroke="#9aa0b0" stroke-width="1.200"/><circle cx="11.500" cy="12.500" r="2.500" fill="none" stroke="#9aa0b0" stroke-width="1.200"/></svg>
<svg style="left:258px;top:718.5px" width="16" height="16" viewBox="0 0 16 16"><circle cx="8" cy="8" r="6.500" fill="#fff" stroke="#111" stroke-width="1.300" stroke-dasharray="1.300 1.300"/><circle cx="8" cy="8" r="4" fill="#8a8a10" stroke="#333" stroke-width=".8"/></svg>
<svg style="left:297px;top:718.5px" width="16" height="16" viewBox="0 0 16 16"><path d="M4.5 2.5h7l3.5 6l-3.5 6h-7l-3.5 -6z" fill="#c4cee4" stroke="#1010e0" stroke-width="1.800"/><rect x="0" y="1" width="1" height="1" fill="#111"/></svg>
<svg style="left:319px;top:718.5px" width="16" height="16" viewBox="0 0 16 16"><path d="M4.5 2.5h7l3.5 6l-3.5 6h-7l-3.5 -6z" fill="#c4cee4" stroke="#f4f020" stroke-width="1.800"/><path d="M4.500 2.500L1 8.500l3.500 6H8" fill="none" stroke="#1010e0" stroke-width="1.800" stroke-dasharray="3 1"/></svg>
<svg style="left:341px;top:718.5px" width="16" height="16" viewBox="0 0 16 16"><rect x="1" y="4" width="11" height="8" fill="none" stroke="#8a90a0" stroke-width="1"/><path d="M5.75 4h5.5l2.75 2.5l-2.75 2.5h-5.5l-2.75 -2.5z" fill="none" stroke="#1a2ad0" stroke-width="1.300"/><path d="M6.75 9h5.5l2.75 3l-2.75 3h-5.5l-2.75 -3z" fill="none" stroke="#1a2ad0" stroke-width="1.300"/><path d="M1 5l7-4 7 4" fill="none" stroke="#1a2ad0" stroke-width="1.300"/></svg>
<svg style="left:363.5px;top:718.5px" width="16" height="16" viewBox="0 0 16 16"><path d="M1 1l6 6.500M7 1L1 7.500M9 1l6 6.500M15 1L9 7.500M1 8.500L7 15M7 8.500L1 15M9 8.500l6 6.500M15 8.500L9 15" stroke="#1a2ad0" stroke-width="1.300"/><path d="M2.500 2.500l11 11M13.500 2.500l-11 11" stroke="#111" stroke-width="2"/></svg>
<svg style="left:385.5px;top:718.5px" width="16" height="16" viewBox="0 0 16 16"><path d="M1 1l6 6.500M7 1L1 7.500M9 1l6 6.500M15 1L9 7.500M1 8.500L7 15M7 8.500L1 15M9 8.500l6 6.500M15 8.500L9 15" stroke="#d83818" stroke-width="1.300"/><path d="M2.500 2.500l11 11M13.500 2.500l-11 11" stroke="#111" stroke-width="2"/></svg>
<svg style="left:412.5px;top:718.5px" width="16" height="16" viewBox="0 0 16 16"><path d="M4 11.500l6.500-7" stroke="#111" stroke-width="3"/><path d="M4 11.500l6.500-7" stroke="#4a78e0" stroke-width="1"/><circle cx="3.500" cy="12" r="3" fill="#b8d4f4" stroke="#111"/><circle cx="12" cy="3.500" r="3" fill="#f4f020" stroke="#111"/></svg>
<svg style="left:435px;top:718.5px" width="16" height="16" viewBox="0 0 16 16"><path d="M5.25 5h5.5l2.75 3l-2.75 3h-5.5l-2.75 -3z" fill="none" stroke="#111" stroke-width="1.400"/><path d="M5 5L1.500 1.500M11 5l3.500-3.500M5 11l-3.500 3.500M11 11l3.500 3.500" stroke="#1a2ad0" stroke-width="1.600"/><rect x="0" y="0" width="3" height="3" fill="#f4f020"/><rect x="13" y="0" width="3" height="3" fill="#f4f020"/><rect x="0" y="13" width="3" height="3" fill="#f4f020"/><rect x="13" y="13" width="3" height="3" fill="#f4f020"/></svg>
<svg style="left:457px;top:718.5px" width="16" height="16" viewBox="0 0 16 16"><path d="M6.875 0.5h5.75l2.875 3.25l-2.875 3.25h-5.75l-2.875 -3.25z" fill="none" stroke="#e8e020" stroke-width="1.300"/><path d="M3.375 9h5.75l2.875 3.25l-2.875 3.25h-5.75l-2.875 -3.25z" fill="none" stroke="#111" stroke-width="1.300"/></svg>
<svg style="left:479px;top:718.5px" width="16" height="16" viewBox="0 0 16 16"><path d="M6.875 0.5h5.75l2.875 3.25l-2.875 3.25h-5.75l-2.875 -3.25z" fill="none" stroke="#8a909e" stroke-width="1.200"/><path d="M3.375 9h5.75l2.875 3.25l-2.875 3.25h-5.75l-2.875 -3.25z" fill="none" stroke="#8a909e" stroke-width="1.200"/></svg>
<svg style="left:507px;top:718.5px" width="16" height="16" viewBox="0 0 16 16"><rect x="1" y="4" width="11" height="11" fill="none" stroke="#1a1ad8" stroke-width="1.600"/><path d="M1 4l3.500-3h11v11l-3.500 3M12 4l3.500-3" fill="none" stroke="#111" stroke-width="1.400"/><path d="M4.500 1v11h11M4.500 12L1 15" fill="none" stroke="#1a1ad8" stroke-width="1"/></svg>
<svg style="left:530px;top:718.5px" width="16" height="16" viewBox="0 0 16 16"><path d="M8 0.500l7 7.500-7 7.500L1 8zM1 8h14M8 0.500v15" fill="none" stroke="#767c8a" stroke-width="1.100"/></svg>
<svg style="left:551px;top:718.5px" width="16" height="16" viewBox="0 0 16 16"><path d="M4.5 3h7l3.5 4.5l-3.5 4.5h-7l-3.5 -4.5z" fill="none" stroke="#111" stroke-width="1.400"/><circle cx="3" cy="5" r="1.500" fill="#e8e020"/><circle cx="8" cy="3" r="1.500" fill="#e8e020"/><circle cx="13" cy="5" r="1.500" fill="#e8e020"/><circle cx="3" cy="11" r="1.500" fill="#e8e020"/><path d="M1 3l14 11M15 3L1 14" stroke="#e81010" stroke-width="2.600"/></svg>
<svg style="left:584px;top:718.5px" width="16" height="16" viewBox="0 0 16 16"><circle cx="3.500" cy="12" r="3" fill="#dfe3ec" stroke="#70788a" stroke-width="1.100"/></svg>
<svg style="left:612px;top:718.5px" width="16" height="16" viewBox="0 0 16 16"><rect x="0.800" y="0.800" width="14.500" height="14.500" fill="#c8d0f0" stroke="#1a1ad8" stroke-width="1.400"/><path d="M8 1.500l3 3.500H9.200v2H11V5l3.500 3-3.500 3V9.200H9.200V11H11l-3 3.500L5 11h1.800V9.200H5V11L1.500 8 5 5v1.800h1.800V5H5z" fill="#111"/><circle cx="8" cy="8" r="2" fill="#f0e820"/></svg>
<svg style="left:673.5px;top:718.5px" width="16" height="16" viewBox="0 0 16 16"><rect x="0.800" y="1.500" width="14" height="13" fill="#c4ccec" stroke="#1a1ad8" stroke-width="1.400"/><circle cx="6" cy="6.500" r="3.300" fill="#e8ecf8" stroke="#e02020" stroke-width="1.100"/><circle cx="9.500" cy="9.500" r="3.500" fill="#108888"/></svg>
<svg style="left:719px;top:718.5px" width="16" height="16" viewBox="0 0 16 16"><path d="M3 0.500v11.500l2.600-2.600 2 4.600 1.800-.8-2-4.500h3.700z" fill="#fff" stroke="#000" stroke-width="1.200"/></svg>
<svg style="left:740px;top:718.5px" width="16" height="16" viewBox="0 0 16 16"><path d="M8 0l2.500 5.500L16 8l-5.500 2.500L8 16l-2.500-5.500L0 8l5.500-2.500z" fill="#c4ccdc" stroke="#59627a" stroke-width="1.300"/><path d="M5 5l6 6M11 5l-6 6" stroke="#59627a" stroke-width="1.200"/></svg>
<svg style="left:762.5px;top:718.5px" width="16" height="16" viewBox="0 0 16 16"><path d="M12.500 6A5.500 5.500 0 1 0 13 10.500" fill="none" stroke="#111" stroke-width="2.200"/><path d="M7 0.500l6 1-1 5.500z" fill="#111"/></svg>
<svg style="left:784px;top:718.5px" width="16" height="16" viewBox="0 0 16 16"><path d="M8 0l3.200 4H9.200v3H12V4.800L16 8l-4 3.200V9.200H9.200V12h2L8 16l-3.200-4h2V9.200H4v2L0 8l4-3.200v2.200h2.800V4h-2z" fill="#111"/></svg>
<svg style="left:805.5px;top:718.5px" width="16" height="16" viewBox="0 0 16 16"><path d="M1 5V1h4M11 1h4v4M15 11v4h-4M5 15H1v-4M1 1l4.500 4.500M15 1l-4.500 4.500M15 15l-4.500-4.500M1 15l4.500-4.500" fill="none" stroke="#111" stroke-width="1.500"/><rect x="5.500" y="5.500" width="5" height="5" fill="none" stroke="#111" stroke-width="1.800"/></svg>
<svg style="left:827px;top:718.5px" width="16" height="16" viewBox="0 0 16 16"><path d="M14 1.500L1.500 8l12 5" fill="none" stroke="#111" stroke-width="2.200"/><path d="M13.500 5v2M13.500 8.500v2" stroke="#111" stroke-width="1.800"/></svg>
<svg style="left:850px;top:718.5px" width="16" height="16" viewBox="0 0 16 16"><path d="M8 1l5 5H3zM8 5l3.500 5h-7zM5.500 9.500L3.500 15M10.500 9.500l2 5.500M1.500 15h13" fill="none" stroke="#111" stroke-width="1.700"/></svg>
<svg style="left:872px;top:718.5px" width="16" height="16" viewBox="0 0 16 16"><circle cx="8" cy="8" r="6" fill="none" stroke="#111" stroke-width="2" stroke-dasharray="2.500 2"/><rect x="5" y="5" width="6" height="6" rx="1.500" fill="none" stroke="#111" stroke-width="1.800"/></svg>
<svg style="left:893.5px;top:718.5px" width="16" height="16" viewBox="0 0 16 16"><rect x="1.500" y="1.500" width="7" height="6.500" fill="none" stroke="#767c8a" stroke-width="1.600"/><path d="M9 3c2.500 0 3.500 1.500 3.500 3" fill="none" stroke="#767c8a" stroke-width="1.600"/><path d="M1 11h2M5 11h2M1 8.500v2" stroke="#767c8a" stroke-width="1.400"/><rect x="8.500" y="6.500" width="2.500" height="8.500" fill="#c9cfdc" stroke="#aab0c0" stroke-width=".8"/><rect x="12.500" y="6.500" width="2.500" height="8.500" fill="#c9cfdc" stroke="#aab0c0" stroke-width=".8"/></svg>
<svg style="left:915.5px;top:718.5px" width="16" height="16" viewBox="0 0 16 16"><rect x="1.500" y="1.500" width="7" height="6.500" fill="none" stroke="#767c8a" stroke-width="1.600"/><path d="M9 3c2.500 0 3.500 1.500 3.500 3" fill="none" stroke="#767c8a" stroke-width="1.600"/><path d="M1 11h2M5 11h2M1 8.500v2" stroke="#767c8a" stroke-width="1.400"/><rect x="8" y="7" width="8" height="8" fill="#868c9a"/></svg>
<svg style="left:961.5px;top:718.5px" width="16" height="16" viewBox="0 0 16 16"><path d="M1.500 0.500V14.500h13M4.500 6v8M7.500 6v8M10.500 6v8M13.500 6v8" fill="none" stroke="#59627a" stroke-width="1.300"/></svg>
<svg style="left:983.5px;top:718.5px" width="16" height="16" viewBox="0 0 16 16"><path d="M1.500 14.500L8 1M1.500 14.500h13M8 1c2 3 5 8 6.500 13.500" fill="none" stroke="#59627a" stroke-width="1.200"/></svg>
<svg style="left:1005px;top:718.5px" width="16" height="16" viewBox="0 0 16 16"><circle cx="5" cy="11.500" r="3.600" fill="none" stroke="#59627a" stroke-width="1.300"/><path d="M5 2v6M3 2h4.500" stroke="#59627a" stroke-width="1.600"/><path d="M8.500 8l6-6" stroke="#59627a" stroke-width="2.600"/></svg>
<svg style="left:1028px;top:718.5px" width="16" height="16" viewBox="0 0 16 16"><path d="M1.500 5.500l11-4 2.500 2.500-3 6.500-10.500 4.500zM12.500 1.500l-1 9M1.500 15l13.500-11" fill="none" stroke="#59627a" stroke-width="1.200"/></svg>
<svg style="left:108px;top:725px" width="5" height="3" viewBox="0 0 5 3"><path d="M0 0h5L2.500 3z" fill="#1a2233"/></svg>
<svg style="left:279px;top:725px" width="5" height="3" viewBox="0 0 5 3"><path d="M0 0h5L2.500 3z" fill="#1a2233"/></svg>
<svg style="left:572px;top:725px" width="5" height="3" viewBox="0 0 5 3"><path d="M0 0h5L2.500 3z" fill="#1a2233"/></svg>
<svg style="left:632px;top:725px" width="5" height="3" viewBox="0 0 5 3"><path d="M0 0h5L2.500 3z" fill="#1a2233"/></svg>
<span class="t" style="top:715.0px;line-height:16px;font-size:10px;color:#767c8c;font-weight:bold;left:589px;letter-spacing:-0.336px;">Fe</span>
<span class="t" style="top:719.5px;line-height:16px;font-size:17px;color:#0a0aa0;font-weight:bold;font-family:'Liberation Serif',serif;left:651px;font-style:italic;-webkit-text-stroke:.6px #0a0aa0;">M</span>
<div style="left:8px;top:739px;width:1444px;height:20px;background:#2b3a58;"></div>
<span class="t" style="top:742.0px;line-height:16px;font-size:12px;color:#fff;left:11.5px;letter-spacing:-0.465px;">For Help, press F1</span>
<div style="left:690px;top:741px;width:1px;height:17px;background:#dfe4ee;"></div>
<div style="left:793px;top:741px;width:1px;height:17px;background:#dfe4ee;"></div>
<div style="left:820px;top:741px;width:1px;height:17px;background:#dfe4ee;"></div>
<div style="left:848px;top:741px;width:1px;height:17px;background:#dfe4ee;"></div>
<div style="left:876px;top:741px;width:1px;height:17px;background:#dfe4ee;"></div>
<div style="left:1092px;top:741px;width:1px;height:17px;background:#dfe4ee;"></div>
<div style="left:1163px;top:741px;width:1px;height:17px;background:#dfe4ee;"></div>
<div style="left:1234px;top:741px;width:1px;height:17px;background:#dfe4ee;"></div>
<div style="left:1305px;top:741px;width:1px;height:17px;background:#dfe4ee;"></div>
<div style="left:1369px;top:741px;width:1px;height:17px;background:#dfe4ee;"></div>
<span class="t" style="top:742.0px;line-height:16px;font-size:12px;color:#fff;left:854px;letter-spacing:-0.086px;">Blar</span>
<div style="left:880px;top:742px;width:101px;height:16px;background:#bcc7db;"></div>
<span class="t" style="top:742.0px;line-height:16px;font-size:12px;color:#000;left:883px;letter-spacing:0.107px;">Manual</span>
<span class="t" style="top:742.0px;line-height:16px;font-size:12px;color:#fff;left:986px;letter-spacing:-0.487px;">Y. 1.17665 c</span>
<div style="left:1048px;top:743px;width:1px;height:14px;background:#fff;"></div>
<span class="t" style="top:742.0px;line-height:16px;font-size:12px;color:#fff;left:1098px;letter-spacing:-0.051px;">3 parms</span>
<span class="t" style="top:742.0px;line-height:16px;font-size:12px;color:#fff;left:1169px;letter-spacing:-0.045px;">48 atoms</span>
<span class="t" style="top:742.0px;line-height:16px;font-size:12px;color:#fff;left:1240px;letter-spacing:-0.049px;">24 bonds</span>
<span class="t" style="top:742.0px;line-height:16px;font-size:12px;color:#fff;left:1311px;letter-spacing:0.182px;">polymeric</span>
<span class="t" style="top:742.0px;line-height:16px;font-size:12px;color:#fff;left:1374px;letter-spacing:0.246px;">0 polyh.</span>
<div style="left:1448px;top:746px;width:2px;height:2px;background:#fff;"></div>
<div style="left:1448px;top:749px;width:2px;height:2px;background:#fff;"></div>
<div style="left:1445px;top:749px;width:2px;height:2px;background:#fff;"></div>
<div style="left:1448px;top:752px;width:2px;height:2px;background:#fff;"></div>
<div style="left:1445px;top:752px;width:2px;height:2px;background:#fff;"></div>
<div style="left:1442px;top:752px;width:2px;height:2px;background:#fff;"></div>
<div style="left:1448px;top:755px;width:2px;height:2px;background:#fff;"></div>
<div style="left:1445px;top:755px;width:2px;height:2px;background:#fff;"></div>
<div style="left:1442px;top:755px;width:2px;height:2px;background:#fff;"></div>
<div style="left:1439px;top:755px;width:2px;height:2px;background:#fff;"></div>
<div style="left:549px;top:55px;width:33px;height:24px;background:#dde3ec;border:1px solid #eef1f6;border-bottom:none;border-radius:2px 2px 0 0;box-shadow:0 0 0 1px #a9b3c6;"></div>
<div style="left:549px;top:78px;width:193px;height:307px;background:#dde3ec;border:1px solid #a7b1c2;box-shadow:2px 2px 3px rgba(0,0,0,.25);"></div>
<div style="left:550px;top:79px;width:27px;height:305px;background:#e5e9f0;"></div>
<div style="left:550px;top:78px;width:31px;height:1px;background:#dde3ec;"></div>
<div style="left:587px;top:124px;width:153px;height:1px;background:#b9c1cf;"></div>
<div style="left:587px;top:125px;width:153px;height:1px;background:#eef1f6;"></div>
<div style="left:587px;top:149px;width:153px;height:1px;background:#b9c1cf;"></div>
<div style="left:587px;top:150px;width:153px;height:1px;background:#eef1f6;"></div>
<div style="left:587px;top:240px;width:153px;height:1px;background:#b9c1cf;"></div>
<div style="left:587px;top:241px;width:153px;height:1px;background:#eef1f6;"></div>
<div style="left:587px;top:265px;width:153px;height:1px;background:#b9c1cf;"></div>
<div style="left:587px;top:266px;width:153px;height:1px;background:#eef1f6;"></div>
<div style="left:587px;top:334px;width:153px;height:1px;background:#b9c1cf;"></div>
<div style="left:587px;top:335px;width:153px;height:1px;background:#eef1f6;"></div>
<div style="left:587px;top:359px;width:153px;height:1px;background:#b9c1cf;"></div>
<div style="left:587px;top:360px;width:153px;height:1px;background:#eef1f6;"></div>
<div style="left:552px;top:361px;width:187px;height:22px;background:linear-gradient(180deg,#fdf6de 0,#fbe7ac 100%);border:1px solid #ebc970;border-radius:3px;"></div>
<span class="t" style="top:82.0px;line-height:16px;font-size:12px;color:#111;left:587px;letter-spacing:-0.147px;">Picture Edit View</span>
<span class="t" style="top:104.0px;line-height:16px;font-size:12px;color:#111;left:587px;letter-spacing:-0.058px;">Thumbnails Preview</span>
<span class="t" style="top:129.0px;line-height:16px;font-size:12px;color:#111;left:587px;letter-spacing:-0.097px;">All Structures</span>
<span class="t" style="top:154.0px;line-height:16px;font-size:12px;color:#8e939d;left:587px;letter-spacing:-0.059px;">Tab Overview</span>
<span class="t" style="top:176.0px;line-height:16px;font-size:12px;color:#8e939d;left:587px;letter-spacing:-0.208px;">Show Tab Bar</span>
<span class="t" style="top:198.0px;line-height:16px;font-size:12px;color:#8e939d;left:587px;letter-spacing:-0.260px;">Show Link Bar</span>
<span class="t" style="top:220.0px;line-height:16px;font-size:12px;color:#8e939d;left:587px;letter-spacing:-0.026px;">Show Link Thumbnails</span>
<span class="t" style="top:245.0px;line-height:16px;font-size:12px;color:#111;left:587px;letter-spacing:-0.276px;">Expand Pictures View</span>
<span class="t" style="top:270.0px;line-height:16px;font-size:12px;color:#111;left:587px;letter-spacing:-0.178px;">Tiles</span>
<span class="t" style="top:292.0px;line-height:16px;font-size:12px;color:#111;left:587px;letter-spacing:0.138px;">Content</span>
<span class="t" style="top:314.0px;line-height:16px;font-size:12px;color:#111;left:587px;letter-spacing:-0.241px;">Details</span>
<span class="t" style="top:339.0px;line-height:16px;font-size:12px;color:#111;left:587px;letter-spacing:-0.094px;">Group Items</span>
<span class="t" style="top:364.0px;line-height:16px;font-size:12px;color:#111;left:587px;letter-spacing:-0.254px;">Sort</span>
<svg style="left:727px;top:368px" width="5" height="8" viewBox="0 0 5 8"><path d="M0 0l5 4-5 4z" fill="#111"/></svg>
<svg style="left:552px;top:58px" width="16" height="16" viewBox="0 0 16 16"><path d="M1.500 13.500V2.500h6v3h7v8z" fill="#e9edf3" stroke="#1a1a1a" stroke-width="1.100"/></svg>
<svg style="left:573px;top:65px" width="5" height="3" viewBox="0 0 5 3"><path d="M0 0h5L2.500 3z" fill="#000"/></svg>
<div style="left:554px;top:102px;width:20px;height:20px;background:#fdeebe;border:1px solid #f3d382;border-radius:2px;"></div>
<div style="left:554px;top:127px;width:20px;height:20px;background:#fdeebe;border:1px solid #f3d382;border-radius:2px;"></div>
<svg style="left:559px;top:132px" width="10" height="9" viewBox="0 0 10 9"><path d="M1 4.5l3 3 5-6" stroke="#111" stroke-width="1.7" fill="none"/></svg>
<svg style="left:555.5px;top:82px" width="16" height="16" viewBox="0 0 16 16"><path d="M1.500 13.500V2.500h6v3h7v8z" fill="#e9edf3" stroke="#1a1a1a" stroke-width="1.100"/></svg>
<div style="left:557px;top:106px;width:4px;height:3px;border:1px solid #222;background:#fff;"></div>
<div style="left:562px;top:106px;width:4px;height:3px;border:1px solid #222;background:#fff;"></div>
<div style="left:567px;top:106px;width:4px;height:3px;border:1px solid #222;background:#fff;"></div>
<div style="left:557px;top:110px;width:4px;height:3px;border:1px solid #222;background:#fff;"></div>
<div style="left:562px;top:110px;width:4px;height:3px;border:1px solid #222;background:#fff;"></div>
<div style="left:567px;top:110px;width:4px;height:3px;border:1px solid #222;background:#fff;"></div>
<div style="left:557px;top:114px;width:4px;height:3px;border:1px solid #222;background:#fff;"></div>
<div style="left:562px;top:114px;width:4px;height:3px;border:1px solid #222;background:#fff;"></div>
<div style="left:567px;top:114px;width:4px;height:3px;border:1px solid #222;background:#fff;"></div>
<div style="left:557px;top:272px;width:4px;height:3px;border:1px solid #222;background:#fff;"></div>
<div style="left:562px;top:272px;width:4px;height:3px;border:1px solid #222;background:#fff;"></div>
<div style="left:567px;top:272px;width:4px;height:3px;border:1px solid #222;background:#fff;"></div>
<div style="left:557px;top:276px;width:4px;height:3px;border:1px solid #222;background:#fff;"></div>
<div style="left:562px;top:276px;width:4px;height:3px;border:1px solid #222;background:#fff;"></div>
<div style="left:567px;top:276px;width:4px;height:3px;border:1px solid #222;background:#fff;"></div>
<div style="left:557px;top:280px;width:4px;height:3px;border:1px solid #222;background:#fff;"></div>
<div style="left:562px;top:280px;width:4px;height:3px;border:1px solid #222;background:#fff;"></div>
<div style="left:567px;top:280px;width:4px;height:3px;border:1px solid #222;background:#fff;"></div>
<div style="left:557px;top:292px;width:4px;height:4px;border:1px solid #222;background:#fff;"></div>
<div style="left:562px;top:293px;width:1px;height:2px;background:#555;"></div>
<div style="left:565px;top:292px;width:4px;height:4px;border:1px solid #222;background:#fff;"></div>
<div style="left:570px;top:293px;width:1px;height:2px;background:#555;"></div>
<div style="left:557px;top:297px;width:4px;height:4px;border:1px solid #222;background:#fff;"></div>
<div style="left:562px;top:298px;width:1px;height:2px;background:#555;"></div>
<div style="left:565px;top:297px;width:4px;height:4px;border:1px solid #222;background:#fff;"></div>
<div style="left:570px;top:298px;width:1px;height:2px;background:#555;"></div>
<div style="left:557px;top:302px;width:4px;height:4px;border:1px solid #222;background:#fff;"></div>
<div style="left:562px;top:303px;width:1px;height:2px;background:#555;"></div>
<div style="left:565px;top:302px;width:4px;height:4px;border:1px solid #222;background:#fff;"></div>
<div style="left:570px;top:303px;width:1px;height:2px;background:#555;"></div>
<div style="left:554px;top:174px;width:20px;height:20px;border:1px solid #8d939e;border-radius:2px;"></div>
<svg style="left:559px;top:179px" width="10" height="9" viewBox="0 0 10 9"><path d="M1 4.5l3 3 5-6" stroke="#8e939d" stroke-width="1.7" fill="none"/></svg>
<div style="left:554px;top:218px;width:20px;height:20px;border:1px solid #8d939e;border-radius:2px;"></div>
<svg style="left:559px;top:223px" width="10" height="9" viewBox="0 0 10 9"><path d="M1 4.5l3 3 5-6" stroke="#8e939d" stroke-width="1.7" fill="none"/></svg>
<div style="left:554px;top:312px;width:20px;height:20px;background:#fdeebe;border:1px solid #f3d382;border-radius:2px;"></div>
<div style="left:554px;top:337px;width:20px;height:20px;background:#fdeebe;border:1px solid #f3d382;border-radius:2px;"></div>
<div style="left:557px;top:315px;width:4px;height:4px;border:1px solid #222;background:#fff;"></div>
<div style="left:563px;top:315px;width:8px;height:1px;background:#9aa;"></div>
<div style="left:563px;top:317px;width:8px;height:1px;background:#9aa;"></div>
<div style="left:557px;top:320px;width:4px;height:4px;border:1px solid #222;background:#fff;"></div>
<div style="left:563px;top:320px;width:8px;height:1px;background:#9aa;"></div>
<div style="left:563px;top:322px;width:8px;height:1px;background:#9aa;"></div>
<div style="left:557px;top:325px;width:4px;height:4px;border:1px solid #222;background:#fff;"></div>
<div style="left:563px;top:325px;width:8px;height:1px;background:#9aa;"></div>
<div style="left:563px;top:327px;width:8px;height:1px;background:#9aa;"></div>
<div style="left:557px;top:341px;width:5px;height:4px;border:1px solid #222;background:#fff;"></div>
<div style="left:563px;top:342px;width:9px;height:1px;background:#222;"></div>
<div style="left:557px;top:347px;width:14px;height:1px;background:#222;"></div>
<div style="left:557px;top:350px;width:5px;height:4px;border:1px solid #222;background:#fff;"></div>
<div style="left:563px;top:351px;width:9px;height:1px;background:#222;"></div>
<div style="left:740px;top:361px;width:211px;height:143px;background:#dde3ec;border:1px solid #a7b1c2;box-shadow:2px 2px 3px rgba(0,0,0,.25);"></div>
<div style="left:741px;top:362px;width:27px;height:141px;background:#e5e9f0;"></div>
<div style="left:778px;top:387px;width:171px;height:1px;background:#b9c1cf;"></div>
<div style="left:778px;top:388px;width:171px;height:1px;background:#eef1f6;"></div>
<div style="left:778px;top:456px;width:171px;height:1px;background:#b9c1cf;"></div>
<div style="left:778px;top:457px;width:171px;height:1px;background:#eef1f6;"></div>
<div style="left:745px;top:365px;width:20px;height:20px;background:#fdeebe;border:1px solid #f3d382;border-radius:2px;"></div>
<svg style="left:750px;top:370px" width="10" height="9" viewBox="0 0 10 9"><path d="M1 4.5l3 3 5-6" stroke="#111" stroke-width="1.7" fill="none"/></svg>
<span class="t" style="top:367.0px;line-height:16px;font-size:12px;color:#111;left:778px;letter-spacing:-0.120px;">Sort by Structure</span>
<span class="t" style="top:392.0px;line-height:16px;font-size:12px;color:#111;left:778px;letter-spacing:-0.028px;">Sort by Title</span>
<span class="t" style="top:414.0px;line-height:16px;font-size:12px;color:#111;left:778px;letter-spacing:-0.050px;">Sort by Creation Time</span>
<span class="t" style="top:436.0px;line-height:16px;font-size:12px;color:#111;left:778px;letter-spacing:0.131px;">Sort by Modification Time</span>
<span class="t" style="top:461.0px;line-height:16px;font-size:12px;color:#8e939d;left:778px;letter-spacing:-0.005px;">Ascending</span>
<span class="t" style="top:483.0px;line-height:16px;font-size:12px;color:#8e939d;left:778px;letter-spacing:-0.138px;">Descending</span>
</div></body></html>
